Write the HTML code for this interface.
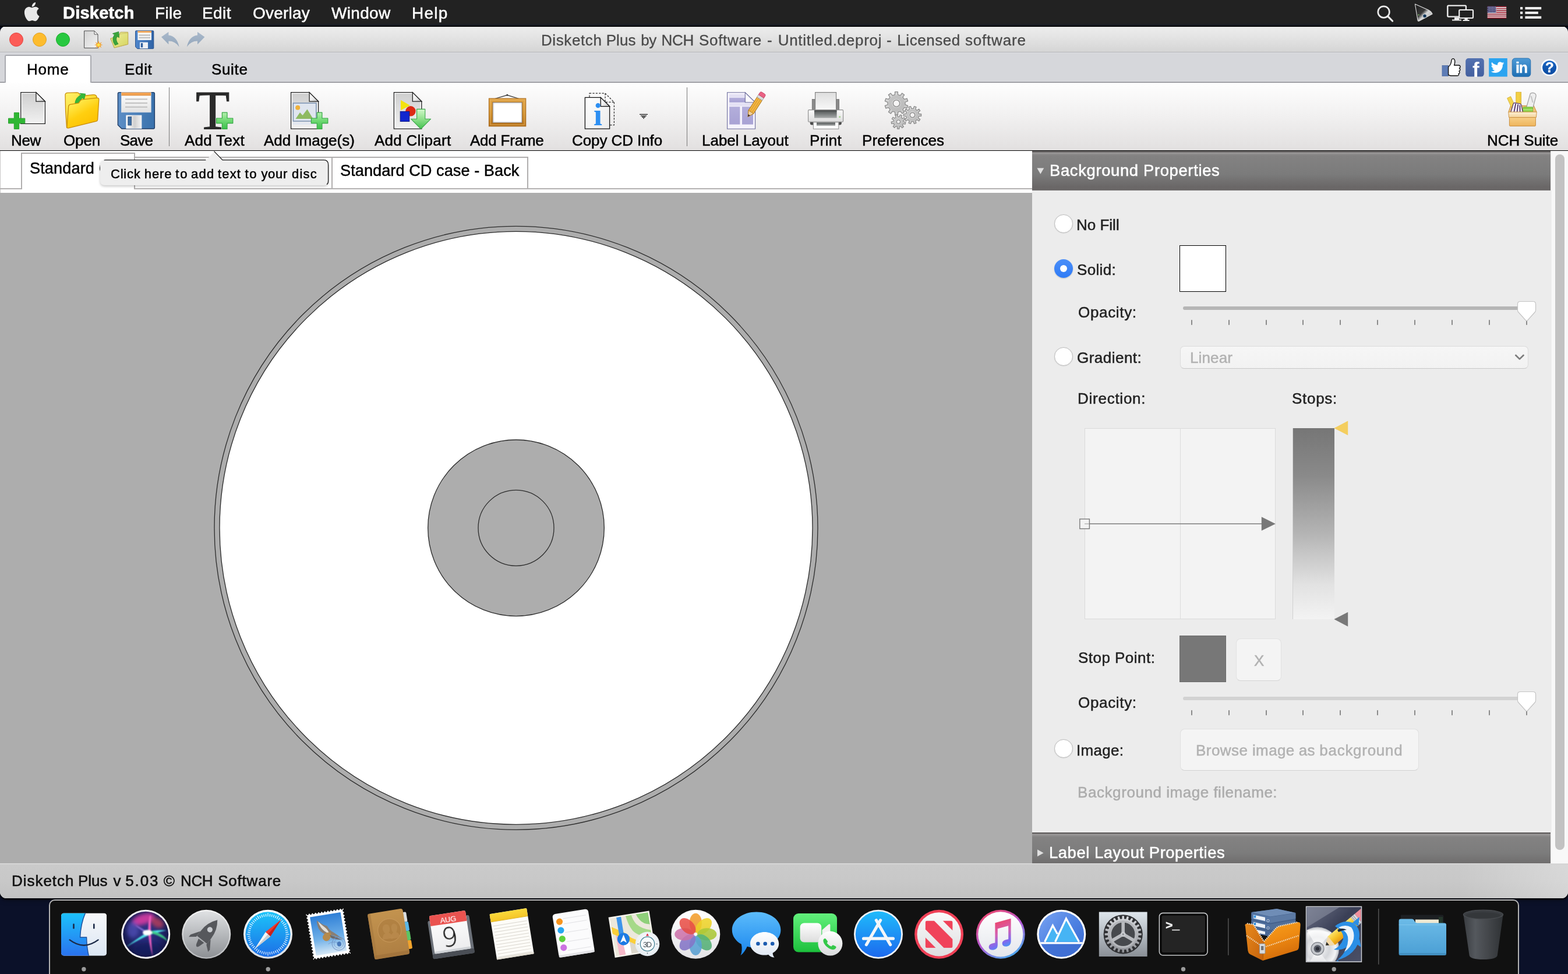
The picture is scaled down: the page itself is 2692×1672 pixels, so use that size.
<!DOCTYPE html>
<html lang="en">
<head>
<meta charset="utf-8">
<title>Disketch Plus by NCH Software - Untitled.deproj - Licensed software</title>
<style>

html,body{margin:0;padding:0;background:#0b1129;}
body{width:2692px;height:1672px;font-family:"Liberation Sans",sans-serif;}
#screen{position:relative;width:2692px;height:1672px;overflow:hidden;background:#0b1129;}
#screen div,#screen svg,#screen .part{position:absolute;box-sizing:border-box;}
.part{left:0;top:0;width:0;height:0;margin:0;padding:0;}
.t{white-space:nowrap;margin:0;padding:0;will-change:transform;}

</style>
</head>
<body>
<div id="screen">
<div id="window" style="left:0;top:45px;width:2692px;height:1497px;border-radius:10px 10px 11px 11px;background:#ececec;overflow:hidden;box-shadow:0 1px 3px 1px rgba(0,0,0,.9),0 3px 10px rgba(0,0,0,.35);"></div>
<header class="part" id="sec-menubar" aria-label="macOS menu bar">
<div id="menubar" style="left:0;top:0;width:2692px;height:46px;background:linear-gradient(#222222 0,#222222 40px,#1d2028 42px,#14161c 44px,#000 45.5px);"></div>
<svg id="mbicons" style="left:0;top:0;" width="2692" height="46" viewBox="0 0 2692 46">
<g transform="translate(41.65 1.7) scale(0.068 0.0721)"><path d="M318.7 268.7c-.2-36.7 16.400-64.400 50-84.800-18.800-26.900-47.200-41.700-84.700-44.600-35.500-2.800-74.300 20.700-88.500 20.700-15 0-49.400-19.700-76.400-19.700C63.300 141.200 4 184.800 4 273.500q0 39.300 14.400 81.200c12.800 36.700 59 126.700 107.200 125.200 25.200-.6 43-17.900 75.800-17.900 31.800 0 48.300 17.900 76.400 17.900 48.600-.7 90.400-82.500 102.600-119.300-65.200-30.700-61.700-90-61.700-91.900zm-56.600-164.200c27.300-32.400 24.800-61.900 24-72.500-24.100 1.400-52 16.400-67.900 34.900-17.500 19.800-27.800 44.300-25.600 71.900 26.100 2 49.900-11.400 69.500-34.300z" fill="#e9e9e9"/></g>
<circle cx="2375.6" cy="20.6" r="9.8" fill="none" stroke="#ebebeb" stroke-width="2.7"/>
<path d="M2382.6 27.8 L2390.6 36" stroke="#ebebeb" stroke-width="3.2" stroke-linecap="round"/>
<defs><linearGradient id="mbProj" x1="0" y1="0" x2="1" y2="1"><stop offset="0" stop-color="#1a1a1a"/><stop offset="0.45" stop-color="#3a3a3a"/><stop offset="0.6" stop-color="#d8d8d8"/><stop offset="1" stop-color="#9a9a9a"/></linearGradient></defs>
<path d="M2429.4 7 L2452 17 Q2457.6 19.6 2459 24 L2436.5 36 Q2434.4 37 2434 34.6 Z" fill="url(#mbProj)" stroke="#e4e4e4" stroke-width="1.1" stroke-linejoin="round"/>
<circle cx="2446" cy="27.4" r="3.4" fill="#14385a" stroke="#e0e0e0" stroke-width="1"/>
<circle cx="2435.6" cy="25.6" r="1.1" fill="#7fc06a"/>
<rect x="2485.3" y="9.6" width="31.6" height="19" rx="1.5" fill="#222" stroke="#ededed" stroke-width="2.4"/>
<path d="M2497 30 V33.4 H2493 V35.6 H2509 V33.4 H2505 V30 Z" fill="#ededed"/>
<rect x="2505.2" y="17" width="23.8" height="14" rx="1.2" fill="#222" stroke="#ededed" stroke-width="2.2"/>
<path d="M2514.4 32 V34 H2511.6 V36 H2522.6 V34 H2519.8 V32 Z" fill="#ededed"/>
<rect x="2553.6" y="10.80" width="32.6" height="1.6" fill="#b5283c"/><rect x="2553.6" y="12.40" width="32.6" height="1.6" fill="#f2f2f2"/><rect x="2553.6" y="14.00" width="32.6" height="1.6" fill="#b5283c"/><rect x="2553.6" y="15.60" width="32.6" height="1.6" fill="#f2f2f2"/><rect x="2553.6" y="17.20" width="32.6" height="1.6" fill="#b5283c"/><rect x="2553.6" y="18.80" width="32.6" height="1.6" fill="#f2f2f2"/><rect x="2553.6" y="20.40" width="32.6" height="1.6" fill="#b5283c"/><rect x="2553.6" y="22.00" width="32.6" height="1.6" fill="#f2f2f2"/><rect x="2553.6" y="23.60" width="32.6" height="1.6" fill="#b5283c"/><rect x="2553.6" y="25.20" width="32.6" height="1.6" fill="#f2f2f2"/><rect x="2553.6" y="26.80" width="32.6" height="1.6" fill="#b5283c"/><rect x="2553.6" y="28.40" width="32.6" height="1.6" fill="#f2f2f2"/><rect x="2553.6" y="30.00" width="32.6" height="1.6" fill="#b5283c"/>
<rect x="2553.6" y="10.8" width="14.8" height="11.2" fill="#3c3b6e"/>
<circle cx="2555.20" cy="12.20" r="0.6" fill="#e8e8f0"/><circle cx="2557.65" cy="12.20" r="0.6" fill="#e8e8f0"/><circle cx="2560.10" cy="12.20" r="0.6" fill="#e8e8f0"/><circle cx="2562.55" cy="12.20" r="0.6" fill="#e8e8f0"/><circle cx="2565.00" cy="12.20" r="0.6" fill="#e8e8f0"/><circle cx="2567.45" cy="12.20" r="0.6" fill="#e8e8f0"/><circle cx="2556.40" cy="14.15" r="0.6" fill="#e8e8f0"/><circle cx="2558.85" cy="14.15" r="0.6" fill="#e8e8f0"/><circle cx="2561.30" cy="14.15" r="0.6" fill="#e8e8f0"/><circle cx="2563.75" cy="14.15" r="0.6" fill="#e8e8f0"/><circle cx="2566.20" cy="14.15" r="0.6" fill="#e8e8f0"/><circle cx="2568.65" cy="14.15" r="0.6" fill="#e8e8f0"/><circle cx="2555.20" cy="16.10" r="0.6" fill="#e8e8f0"/><circle cx="2557.65" cy="16.10" r="0.6" fill="#e8e8f0"/><circle cx="2560.10" cy="16.10" r="0.6" fill="#e8e8f0"/><circle cx="2562.55" cy="16.10" r="0.6" fill="#e8e8f0"/><circle cx="2565.00" cy="16.10" r="0.6" fill="#e8e8f0"/><circle cx="2567.45" cy="16.10" r="0.6" fill="#e8e8f0"/><circle cx="2556.40" cy="18.05" r="0.6" fill="#e8e8f0"/><circle cx="2558.85" cy="18.05" r="0.6" fill="#e8e8f0"/><circle cx="2561.30" cy="18.05" r="0.6" fill="#e8e8f0"/><circle cx="2563.75" cy="18.05" r="0.6" fill="#e8e8f0"/><circle cx="2566.20" cy="18.05" r="0.6" fill="#e8e8f0"/><circle cx="2568.65" cy="18.05" r="0.6" fill="#e8e8f0"/><circle cx="2555.20" cy="20.00" r="0.6" fill="#e8e8f0"/><circle cx="2557.65" cy="20.00" r="0.6" fill="#e8e8f0"/><circle cx="2560.10" cy="20.00" r="0.6" fill="#e8e8f0"/><circle cx="2562.55" cy="20.00" r="0.6" fill="#e8e8f0"/><circle cx="2565.00" cy="20.00" r="0.6" fill="#e8e8f0"/><circle cx="2567.45" cy="20.00" r="0.6" fill="#e8e8f0"/><circle cx="2556.40" cy="21.95" r="0.6" fill="#e8e8f0"/><circle cx="2558.85" cy="21.95" r="0.6" fill="#e8e8f0"/><circle cx="2561.30" cy="21.95" r="0.6" fill="#e8e8f0"/><circle cx="2563.75" cy="21.95" r="0.6" fill="#e8e8f0"/><circle cx="2566.20" cy="21.95" r="0.6" fill="#e8e8f0"/><circle cx="2568.65" cy="21.95" r="0.6" fill="#e8e8f0"/>
<rect x="2610" y="12" width="4.2" height="4.2" fill="#ededed"/><rect x="2618.4" y="12" width="27.8" height="4.2" fill="#ededed"/>
<rect x="2610" y="19.9" width="4.2" height="4.2" fill="#ededed"/><rect x="2618.4" y="19.9" width="22.4" height="4.2" fill="#ededed"/>
<rect x="2610" y="27.8" width="4.2" height="4.2" fill="#ededed"/><rect x="2618.4" y="27.8" width="27.8" height="4.2" fill="#ededed"/>
</svg>
<div class="t" style="left:108.04px;top:7.80px;font-size:29px;line-height:29px;letter-spacing:0.218px;color:#fff;font-weight:bold;-webkit-text-stroke:0.7px #fff;">Disketch</div>
<div class="t" style="left:265.52px;top:9.00px;font-size:28px;line-height:28px;letter-spacing:0.334px;color:#fff;-webkit-text-stroke:0.5px #fff;">File</div>
<div class="t" style="left:347.12px;top:9.00px;font-size:28px;line-height:28px;letter-spacing:0.433px;color:#fff;-webkit-text-stroke:0.5px #fff;">Edit</div>
<div class="t" style="left:433.87px;top:9.00px;font-size:28px;line-height:28px;letter-spacing:0.213px;color:#fff;-webkit-text-stroke:0.5px #fff;">Overlay</div>
<div class="t" style="left:569.14px;top:9.00px;font-size:28px;line-height:28px;letter-spacing:0.303px;color:#fff;-webkit-text-stroke:0.5px #fff;">Window</div>
<div class="t" style="left:706.82px;top:9.00px;font-size:28px;line-height:28px;letter-spacing:1.273px;color:#fff;-webkit-text-stroke:0.5px #fff;">Help</div>
</header>
<section class="part" id="sec-titlebar" aria-label="Window title bar">
<div id="titlebar" style="left:0;top:45.5px;width:2692px;height:44.5px;border-radius:10px 10px 0 0;background:linear-gradient(#ededed,#e4e4e4 40%,#d5d5d5);border-bottom:1.4px solid #b4b5b9;"></div>
<div style="left:16px;top:56px;width:24px;height:24px;border-radius:50%;background:#fc5c57;border:1px solid #e14640;"></div>
<div style="left:56px;top:56px;width:24px;height:24px;border-radius:50%;background:#fdbc2e;border:1px solid #dfa023;"></div>
<div style="left:96px;top:56px;width:24px;height:24px;border-radius:50%;background:#28c840;border:1px solid #1cab29;"></div>
<svg id="qaicons" style="left:130px;top:46px;" width="240" height="44" viewBox="130 46 240 44">
<defs>
<linearGradient id="qpg" x1="0" y1="0" x2="1" y2="1"><stop offset="0" stop-color="#d4d4d4"/><stop offset="1" stop-color="#f2f2f2"/></linearGradient>
<linearGradient id="qfold" x1="0" y1="0" x2="1" y2="1"><stop offset="0" stop-color="#eef0a0"/><stop offset="1" stop-color="#d6d45e"/></linearGradient>
<linearGradient id="qflop" x1="0" y1="0" x2="1" y2="0"><stop offset="0" stop-color="#4f86cc"/><stop offset="1" stop-color="#2f63a6"/></linearGradient>
<linearGradient id="qarrow" x1="0" y1="0" x2="0" y2="1"><stop offset="0" stop-color="#a9b9cb"/><stop offset="1" stop-color="#93a6bb"/></linearGradient>
</defs>
<path d="M144.6 53 H162 L168 59 V82.4 H144.6 Z" fill="url(#qpg)" stroke="#4a4a4a" stroke-width="1"/>
<path d="M162 53 V59 H168 Z" fill="#fff" stroke="#4a4a4a" stroke-width="0.9"/>
<g transform="translate(169.2 77)"><path d="M0 -7 L1.6 -2.6 L5.6 -4.8 L3.2 -1 L7.4 0 L3.2 1.2 L5.2 5 L1.4 2.8 L0 7 L-1.4 2.8 L-5.2 5 L-3.2 1.2 L-7.4 0 L-3.2 -1 L-5.6 -4.8 L-1.6 -2.6 Z" fill="#f6a12a"/><circle r="2.6" fill="#ffe34a"/></g>
<path d="M205 58.4 L207 55.2 H219.6 V76 L196 82 L190 66 L203 62.6 Z" fill="url(#qfold)" stroke="#b9a850" stroke-width="1"/>
<path d="M189.4 66.2 L203.4 62.6 L206.4 58.2 L219.8 56.6 V76.2 L196.4 82.2 Z" fill="none" stroke="#c9b85c" stroke-width="0.8"/>
<path d="M197.6 77.6 Q190.6 68 196.6 59.6 L193.4 57.6 L203.8 54.4 L204.4 64.6 L201.2 62.4 Q197.4 68.6 203 75.4 Z" fill="#3aa43c" stroke="#2a8a2e" stroke-width="0.8" stroke-linejoin="round"/>
<path d="M233.8 52.8 H262.6 Q263.8 52.8 263.8 54 V82.4 Q263.8 83.6 262.6 83.6 H236 L232.6 80.4 V54 Q232.6 52.8 233.8 52.8 Z" fill="url(#qflop)" stroke="#244f8c" stroke-width="1"/>
<rect x="236.4" y="53.2" width="23.6" height="15.6" fill="#f6f6f6"/>
<rect x="236.4" y="53.2" width="23.6" height="2.8" fill="#f3a656"/>
<rect x="238.4" y="59.4" width="19.6" height="2" fill="#b9b9b9"/>
<rect x="238.4" y="63.8" width="19.6" height="2" fill="#b9b9b9"/>
<rect x="240" y="72.6" width="14" height="10.6" fill="#eef1f6"/>
<rect x="241.8" y="74" width="3.4" height="7.4" fill="#2f5f9f"/>
<path d="M277 63.6 L289.4 54.8 V60.4 Q303.6 61.8 307.6 80.4 Q300.4 70.4 289.4 70.6 V76.2 Z" fill="url(#qarrow)"/>
<path d="M351.4 63.6 L339 54.8 V60.4 Q324.8 61.8 320.8 80.4 Q328 70.4 339 70.6 V76.2 Z" fill="url(#qarrow)"/>
</svg>
<div class="t" style="left:929.06px;top:56.00px;font-size:26px;line-height:26px;color:#4a4a4a;-webkit-text-stroke:0.3px #4a4a4a;"><span style="letter-spacing:0.593px;">Disketch</span> <span style="letter-spacing:0.033px;margin-left:0.034px;">Plus</span> <span style="letter-spacing:-0.563px;margin-left:1.635px;">by</span> <span style="letter-spacing:-0.275px;margin-left:1.722px;">NCH</span> <span style="letter-spacing:0.658px;margin-left:1.723px;">Software</span> <span style="letter-spacing:0.000px;margin-left:1.819px;">-</span> <span style="letter-spacing:0.730px;margin-left:2.787px;">Untitled.deproj</span> <span style="letter-spacing:0.000px;margin-left:0.472px;">-</span> <span style="letter-spacing:0.555px;margin-left:2.479px;">Licensed</span> <span style="letter-spacing:0.816px;margin-left:0.820px;">software</span></div>
</section>
<nav class="part" id="sec-ribbon" aria-label="Ribbon tabs">
<div id="ribbon" style="left:0;top:90px;width:2692px;height:52px;background:linear-gradient(#dddee2 0,#dddee2 1.2px,#d6d7db 1.2px,#d6d7db 49.6px,#b9babf 49.6px,#b9babf 50.6px,#828389 50.6px,#828389 52px);"></div>
<div id="tab-home" style="left:7.6px;top:93.6px;width:149.4px;height:49px;background:#fff;border:2px solid #a9aab0;border-bottom:none;border-radius:3px 3px 0 0;"></div>
<svg id="social" style="left:2470px;top:94px;" width="215" height="44" viewBox="2470 94 215 44">
<defs>
<linearGradient id="fbG" x1="0" y1="0" x2="0" y2="1"><stop offset="0" stop-color="#5371b0"/><stop offset="1" stop-color="#435f9f"/></linearGradient>
<linearGradient id="liG" x1="0" y1="0" x2="0" y2="1"><stop offset="0" stop-color="#4d9ad6"/><stop offset="1" stop-color="#1e6fb4"/></linearGradient>
<linearGradient id="hpG" x1="0" y1="0" x2="0" y2="1"><stop offset="0" stop-color="#1a66c4"/><stop offset="1" stop-color="#0a4aa0"/></linearGradient>
</defs>
<rect x="2476" y="112.4" width="10.6" height="18.2" fill="#5d7cb6" stroke="#4f6ca4" stroke-width="0.8"/>
<path d="M2486.6 114.6 Q2490.6 112 2491.6 106 Q2492 100.6 2494.6 100.6 Q2497.8 101 2497.8 105.6 Q2497.8 109 2496.6 112 H2504.4 Q2507 112.2 2507 114.8 Q2507 116.6 2505.4 117.2 Q2507 118 2506.8 120 Q2506.6 121.8 2505 122.2 Q2506.2 123.2 2505.8 125 Q2505.4 126.6 2504 126.8 Q2504.8 127.8 2504.2 129 Q2503.6 130 2502 130 H2491 Q2488.6 129.8 2486.6 128.4 Z" fill="#ffffff" stroke="#0d0d0d" stroke-width="1.4" stroke-linejoin="round"/>
<rect x="2516.2" y="100" width="31.6" height="31.6" rx="5" fill="url(#fbG)"/>
<rect x="2556.2" y="100" width="31.6" height="31.6" fill="#2ba4f0"/>
<path d="M2582.6 108.4 Q2581.4 109 2580 109.2 Q2581.4 108.2 2582 106.6 Q2580.6 107.4 2579 107.8 Q2577.6 106.2 2575.4 106.2 Q2571.4 106.4 2571 110.6 Q2571 111.2 2571.2 111.8 Q2565.2 111.4 2561.2 106.8 Q2560.4 108.2 2560.6 109.8 Q2560.8 111.8 2562.6 113.2 Q2561.4 113.2 2560.4 112.6 Q2560.6 116.2 2564.2 117.4 Q2563.2 117.8 2562 117.6 Q2563 120.6 2566.4 120.8 Q2563.8 123 2559.6 122.8 Q2563.2 125.2 2567.6 125 Q2574.6 124.6 2578 118.8 Q2580.2 115 2580 110.8 Q2581.6 109.8 2582.6 108.4 Z" fill="#ffffff"/>
<rect x="2596.2" y="100" width="31.6" height="31.6" rx="5" fill="url(#liG)" stroke="#1b66a8" stroke-width="0.8"/>
<circle cx="2660.1" cy="115.9" r="15.2" fill="#ffffff" stroke="#c9ccd4" stroke-width="0.8"/>
<circle cx="2660.1" cy="115.9" r="12" fill="url(#hpG)"/>
</svg>
<div class="t" style="left:45.80px;top:105.50px;font-size:26px;line-height:26px;letter-spacing:0.818px;color:#000;-webkit-text-stroke:0.5px #000;">Home</div>
<div class="t" style="left:214.10px;top:105.50px;font-size:26px;line-height:26px;letter-spacing:0.667px;color:#000;-webkit-text-stroke:0.5px #000;">Edit</div>
<div class="t" style="left:362.84px;top:105.50px;font-size:26px;line-height:26px;letter-spacing:0.656px;color:#000;-webkit-text-stroke:0.5px #000;">Suite</div>
<div class="t" style="left:2528.17px;top:101.60px;font-size:35px;line-height:35px;letter-spacing:0.000px;color:#fff;font-weight:bold;z-index:2;">f</div>
<div class="t" style="left:2601.83px;top:104.20px;font-size:25px;line-height:25px;letter-spacing:-1.078px;color:#fff;font-weight:bold;-webkit-text-stroke:0.3px #fff;z-index:2;">in</div>
<div class="t" style="left:2652.98px;top:104.40px;font-size:24px;line-height:24px;letter-spacing:0.000px;color:#fff;font-weight:bold;-webkit-text-stroke:0.4px #fff;z-index:2;">?</div>
</nav>
<section class="part" id="sec-toolbar" aria-label="Home toolbar">
<div id="toolbar" style="left:0;top:142px;width:2692px;height:117px;background:linear-gradient(#fefefe,#f1f0f0 50%,#e2e0e0);border-bottom:1px solid #000;"></div>
<div style="left:289.6px;top:150px;width:1.4px;height:100.5px;background:#7a7a7a;"></div>
<div style="left:1178.8px;top:150px;width:1.4px;height:100.5px;background:#7a7a7a;"></div>

<svg id="tbicons" style="left:0;top:141px;" width="2692" height="118" viewBox="0 141 2692 118">
<defs>
<linearGradient id="pgGray" x1="0" y1="0" x2="0" y2="1"><stop offset="0" stop-color="#cfcfcf"/><stop offset="1" stop-color="#f0f0f0"/></linearGradient>
<linearGradient id="pgWhite" x1="0" y1="0" x2="1" y2="1"><stop offset="0" stop-color="#ffffff"/><stop offset="1" stop-color="#ebebeb"/></linearGradient>
<linearGradient id="pgFold" x1="0" y1="0" x2="1" y2="1"><stop offset="0" stop-color="#ffffff"/><stop offset="0.5" stop-color="#eeeeee"/><stop offset="1" stop-color="#bdbdbd"/></linearGradient>
<linearGradient id="plusG" x1="0" y1="0" x2="0" y2="1"><stop offset="0" stop-color="#b4efae"/><stop offset="0.5" stop-color="#6fd873"/><stop offset="1" stop-color="#3cc04c"/></linearGradient>
<linearGradient id="folderBack" x1="0" y1="0" x2="1" y2="1"><stop offset="0" stop-color="#fff36a"/><stop offset="1" stop-color="#f6c200"/></linearGradient>
<linearGradient id="folderFront" x1="0" y1="0" x2="0.6" y2="1"><stop offset="0" stop-color="#fffbd0"/><stop offset="0.25" stop-color="#ffe84a"/><stop offset="0.6" stop-color="#ffcf10"/><stop offset="1" stop-color="#fdc100"/></linearGradient>
<linearGradient id="floppy" x1="0" y1="0" x2="1" y2="0"><stop offset="0" stop-color="#5c8ec6"/><stop offset="0.5" stop-color="#4a7fb8"/><stop offset="1" stop-color="#3a72ad"/></linearGradient>
<linearGradient id="floppyLabel" x1="0" y1="0" x2="0" y2="1"><stop offset="0" stop-color="#ffffff"/><stop offset="1" stop-color="#e2e2e2"/></linearGradient>
<linearGradient id="shutter" x1="0" y1="0" x2="1" y2="0"><stop offset="0" stop-color="#ffffff"/><stop offset="0.55" stop-color="#d0d0d0"/><stop offset="1" stop-color="#f4f4f4"/></linearGradient>
<linearGradient id="wood" x1="0" y1="0" x2="0" y2="1"><stop offset="0" stop-color="#e0a448"/><stop offset="0.5" stop-color="#d0902e"/><stop offset="1" stop-color="#b46f18"/></linearGradient>
<linearGradient id="arrowG" x1="0" y1="0" x2="0" y2="1"><stop offset="0" stop-color="#d2f8cb"/><stop offset="0.5" stop-color="#8fe08b"/><stop offset="1" stop-color="#43c14f"/></linearGradient>
<linearGradient id="lav" x1="0" y1="0" x2="0" y2="1"><stop offset="0" stop-color="#b3aedb"/><stop offset="1" stop-color="#a8a2d4"/></linearGradient>
<linearGradient id="roller" x1="0" y1="0" x2="0" y2="1"><stop offset="0" stop-color="#4e5252"/><stop offset="1" stop-color="#a8abab"/></linearGradient>
<linearGradient id="prBody" x1="0" y1="0" x2="0" y2="1"><stop offset="0" stop-color="#fbfbfb"/><stop offset="1" stop-color="#dcdcdc"/></linearGradient>
<linearGradient id="prPaper" x1="0" y1="0" x2="0" y2="1"><stop offset="0" stop-color="#dedede"/><stop offset="1" stop-color="#fafafa"/></linearGradient>
<linearGradient id="gearG" x1="0" y1="0" x2="1" y2="1"><stop offset="0" stop-color="#dcdcdc"/><stop offset="1" stop-color="#c2c2c2"/></linearGradient>
<linearGradient id="boxG" x1="0" y1="0" x2="0" y2="1"><stop offset="0" stop-color="#f7cf86"/><stop offset="1" stop-color="#eeb45c"/></linearGradient>
<linearGradient id="rimG" x1="0" y1="0" x2="0" y2="1"><stop offset="0" stop-color="#fdf0d6"/><stop offset="1" stop-color="#f3d39a"/></linearGradient>
<filter id="frblur" x="-20%" y="-20%" width="140%" height="140%"><feGaussianBlur stdDeviation="1.6"/></filter>
<clipPath id="frclip"><rect x="845.8" y="175.6" width="50.7" height="35.3"/></clipPath>
</defs>

<!-- New -->
<path d="M35.8 158.6 H61.900000000000006 L77.4 174.1 V212.3 H35.8 Z" fill="#fff" stroke="#1f1f1f" stroke-width="1.3" stroke-linejoin="miter"/><path d="M38.0 160.79999999999998 H61.400000000000006 V174.6 H75.2 V210.10000000000002 H38.0 Z" fill="url(#pgGray)"/><path d="M61.900000000000006 158.6 L77.4 174.1 H61.900000000000006 Z" fill="url(#pgFold)" stroke="#1f1f1f" stroke-width="1.3" stroke-linejoin="miter"/>
<path d="M24.3 193.4 H32.6 V203.2 H42.8 V211.8 H32.6 V221.4 H24.3 V211.8 H14.5 V203.2 H24.3 Z" fill="#2fb733" stroke="#27a02b" stroke-width="1"/>

<!-- Open -->
<path d="M112 163 Q112 159.6 116 159.4 L132 158.8 Q135 158.8 136.5 161.5 L138.5 165 L160 162.6 Q165 162.3 166 166 L167 172 L167 205 L114.5 219 Q112 190 112 163 Z" fill="url(#folderBack)" stroke="#c98d06" stroke-width="1.3" stroke-linejoin="round"/>
<path d="M128.6 179.4 Q129.2 166.6 139.4 163 L137 160.2 L146.8 161.2 L144.2 171.4 L142 167.8 Q136.2 171.8 136.2 180.8 Z" fill="#34b83a" stroke="#2a9a30" stroke-width="0.8" stroke-linejoin="round"/>
<path d="M117.6 183 Q117.6 180 120.6 179.4 L135 176.8 L138 172.6 Q139.2 171 141.4 170.8 L166.8 168.2 Q169.8 168 169.8 171 L167.6 205.4 Q167.4 207.6 165.2 208.2 L117.4 219.8 Q114.8 220.2 114.9 217.6 Z" fill="url(#folderFront)" stroke="#c98d06" stroke-width="1.3" stroke-linejoin="round"/>

<!-- Save -->
<path d="M204.6 158.6 H263.2 Q265.4 158.6 265.4 160.8 V218.8 Q265.4 221 263.2 221 H209 L202.4 214.6 V160.8 Q202.4 158.6 204.6 158.6 Z" fill="url(#floppy)" stroke="#1f3c66" stroke-width="1.4" stroke-linejoin="round"/>
<rect x="208.4" y="158.8" width="50.8" height="34" fill="url(#floppyLabel)" stroke="#d8dde4" stroke-width="0.8"/>
<rect x="208.4" y="158.8" width="50.8" height="5" fill="#f2a353"/>
<rect x="208.4" y="163.2" width="50.8" height="1" fill="#d98535"/>
<rect x="215" y="169.4" width="38" height="1.8" fill="#bcbcbc"/>
<rect x="215" y="176" width="38" height="1.8" fill="#bcbcbc"/>
<rect x="215" y="182.8" width="38" height="1.8" fill="#bcbcbc"/>
<rect x="216.8" y="198" width="26.2" height="22.6" fill="url(#shutter)" stroke="#e9eef5" stroke-width="0.8"/>
<rect x="219.8" y="200.4" width="5.8" height="14.6" fill="#3f6fa3" stroke="#2c4f7c" stroke-width="0.8"/>

<!-- Add Text plus -->
<path d="M381.40000000000003 193.2 H390.00000000000006 V203.0 H399.8 V211.60000000000002 H390.00000000000006 V221.4 H381.40000000000003 V211.60000000000002 H371.6 V203.0 H381.40000000000003 Z" fill="url(#plusG)" stroke="#35a843" stroke-width="1.2" stroke-linejoin="round"/>

<!-- Add Image -->
<path d="M499.6 158.6 H531.1 L546.6 174.1 V221.2 H499.6 Z" fill="#fff" stroke="#1f1f1f" stroke-width="1.3" stroke-linejoin="miter"/><path d="M501.8 160.79999999999998 H530.6 V174.6 H544.4 V219.0 H501.8 Z" fill="url(#pgGray)"/><path d="M531.1 158.6 L546.6 174.1 H531.1 Z" fill="url(#pgFold)" stroke="#1f1f1f" stroke-width="1.3" stroke-linejoin="miter"/>
<rect x="503.4" y="177" width="39.4" height="31" fill="#dfe5ef" stroke="#7f97b6" stroke-width="1.6"/>
<circle cx="511.2" cy="184.8" r="4" fill="#f0b13a"/>
<path d="M507.5 204 L515 193 L519.5 198 L527.5 187.5 L537.5 204 Z" fill="#8eba62"/>
<rect x="502.6" y="210" width="40" height="4" fill="#e3e8f1"/>
<path d="M544.3 193.2 H552.8999999999999 V203.0 H562.8 V211.60000000000002 H552.8999999999999 V221.4 H544.3 V211.60000000000002 H534.4 V203.0 H544.3 Z" fill="url(#plusG)" stroke="#35a843" stroke-width="1.2" stroke-linejoin="round"/>

<!-- Add Clipart -->
<path d="M676.4 158.6 H708.3 L723.8 174.1 V221.2 H676.4 Z" fill="#fff" stroke="#1f1f1f" stroke-width="1.3" stroke-linejoin="miter"/><path d="M678.6 160.79999999999998 H707.8 V174.6 H721.5999999999999 V219.0 H678.6 Z" fill="url(#pgGray)"/><path d="M708.3 158.6 L723.8 174.1 H708.3 Z" fill="url(#pgFold)" stroke="#1f1f1f" stroke-width="1.3" stroke-linejoin="miter"/>
<path d="M688 171.8 L704 181 L688 189.2 Z" fill="#f4e20c"/>
<circle cx="705" cy="190.8" r="8.7" fill="#dd2a14"/>
<rect x="687.2" y="191.4" width="15.6" height="17" fill="#1026cf" stroke="#0a1786" stroke-width="1"/>
<path d="M715.6 187.4 H729.8 V204.2 H739.6 L722.6 221.4 L705.6 204.2 H715.6 Z" fill="url(#arrowG)" stroke="#3aa848" stroke-width="1.1" stroke-linejoin="round"/>

<!-- Add Frame -->
<path d="M850 169.4 L870.8 163.2 L890.6 169.4" fill="none" stroke="#4a4a4a" stroke-width="1.5" stroke-linejoin="round"/>
<circle cx="870.8" cy="163.2" r="1.4" fill="#333"/>
<rect x="839.4" y="169" width="63.4" height="47.8" fill="url(#wood)" stroke="#a8681a" stroke-width="1"/>
<rect x="842" y="171.6" width="58.2" height="42.6" fill="none" stroke="#e9b765" stroke-width="1.2" opacity="0.7"/>
<rect x="845.8" y="175.6" width="50.7" height="35.3" fill="#ffffff" stroke="#9c6216" stroke-width="1"/>
<g clip-path="url(#frclip)"><rect x="844.8" y="174.6" width="52.7" height="37.3" fill="none" stroke="#8f96a8" stroke-width="3" filter="url(#frblur)"/></g>

<!-- Copy CD Info -->
<path d="M1012 160.2 H1039 L1054.4 175.4 V214.6 H1012 Z" fill="none" stroke="#2a2a2a" stroke-width="1.2" stroke-dasharray="3.2 2.2"/>
<path d="M1039 160.2 V175.4 H1054.4" fill="none" stroke="#2a2a2a" stroke-width="1.2" stroke-dasharray="3.2 2.2"/>
<path d="M1004.4 167.4 H1031.2 L1046.6 182.6 V221.2 H1004.4 Z" fill="url(#pgWhite)" stroke="#111" stroke-width="1.3" stroke-linejoin="miter"/>
<path d="M1031.2 167.4 L1046.6 182.6 H1031.2 Z" fill="url(#pgFold)" stroke="#111" stroke-width="1.3" stroke-linejoin="miter"/>
<path d="M1098 196.4 H1112 M1100 198.8 H1110 M1102 201 H1108 M1104 203.2 H1106" stroke="#1a1a1a" stroke-width="1.3" fill="none"/>

<!-- Label Layout -->
<path d="M1248.6 158.8 H1279.3 L1296.6 175.8 V221.2 H1248.6 Z" fill="#f5f3fc" stroke="#6d6d9c" stroke-width="1.1"/>
<rect x="1252.2" y="161.8" width="27" height="5.6" fill="#e4e1f4"/>
<rect x="1252.2" y="167.8" width="27.2" height="8" fill="url(#lav)"/>
<rect x="1252.2" y="176.6" width="41" height="5.6" fill="#e4e1f4"/>
<rect x="1252.2" y="183.2" width="18.2" height="30.4" fill="url(#lav)"/>
<rect x="1274" y="183.2" width="19" height="30.4" fill="url(#lav)"/>
<path d="M1279.3 158.8 L1296.6 175.8 H1279.3 Z" fill="#fbfaff" stroke="#6d6d9c" stroke-width="1.1" stroke-linejoin="miter"/>
<g transform="translate(1284.2 200.2) rotate(-57)">
<path d="M0 0 L9.5 -5.2 H37 V5.2 H9.5 Z" fill="#f2b544" stroke="#b07a1c" stroke-width="1"/>
<path d="M9.5 -1.8 H37 M9.5 1.8 H37" stroke="#d99a2c" stroke-width="1" fill="none"/>
<path d="M0 0 L9.5 -5.2 V5.2 Z" fill="#f0cf9c" stroke="#b07a1c" stroke-width="0.8"/>
<path d="M0 0 L3.6 -2 V2 Z" fill="#3a2a2a"/>
<rect x="36.5" y="-5.4" width="5" height="10.8" fill="#dcdcdc" stroke="#9a9a9a" stroke-width="0.8"/>
<path d="M41.5 -5.4 H45.6 Q48.2 -5.4 48.2 -2.8 V2.8 Q48.2 5.4 45.6 5.4 H41.5 Z" fill="#ea6284" stroke="#c24464" stroke-width="0.8"/>
</g>

<!-- Print -->
<rect x="1394.3" y="170.4" width="6" height="20" fill="#8a8a8a" stroke="#6e6e6e" stroke-width="0.8"/>
<rect x="1434.6" y="170.4" width="6" height="20" fill="#8a8a8a" stroke="#6e6e6e" stroke-width="0.8"/>
<rect x="1399.6" y="158.6" width="36" height="32" fill="url(#prPaper)" stroke="#7c7c7c" stroke-width="1.1"/>
<rect x="1390.8" y="206" width="54" height="8.6" rx="3" fill="#4a4a4a"/>
<rect x="1387.6" y="188.6" width="60" height="20.6" rx="1.5" fill="url(#prBody)" stroke="#8c8c8c" stroke-width="1.1"/>
<rect x="1398" y="189.6" width="38.6" height="13" fill="url(#roller)"/>
<rect x="1398" y="189.4" width="38.6" height="1.3" fill="#3f4242"/>
<rect x="1440.4" y="199.6" width="2.6" height="2.2" fill="#9ad37e"/>
<rect x="1396.4" y="209.8" width="43.4" height="11.6" fill="#fafafa" stroke="#9a9a9a" stroke-width="1.1"/>
<rect x="1402" y="210.4" width="32" height="5.4" fill="url(#roller)"/>

<!-- Preferences -->
<path d="M1554.05 179.63 L1558.64 181.29 L1557.18 185.83 L1552.48 184.51 L1549.93 188.07 L1552.66 192.11 L1548.82 194.92 L1545.79 191.10 L1541.63 192.47 L1541.46 197.35 L1536.70 197.37 L1536.50 192.49 L1532.33 191.16 L1529.33 195.01 L1525.46 192.22 L1528.16 188.16 L1525.57 184.63 L1520.89 185.98 L1519.39 181.45 L1523.97 179.75 L1523.95 175.37 L1519.36 173.71 L1520.82 169.17 L1525.52 170.49 L1528.07 166.93 L1525.34 162.89 L1529.18 160.08 L1532.21 163.90 L1536.37 162.53 L1536.54 157.65 L1541.30 157.63 L1541.50 162.51 L1545.67 163.84 L1548.67 159.99 L1552.54 162.78 L1549.84 166.84 L1552.43 170.37 L1557.11 169.02 L1558.61 173.55 L1554.03 175.25 Z M1544.60 177.50 A5.6 5.6 0 1 0 1533.40 177.50 A5.6 5.6 0 1 0 1544.60 177.50 Z" fill="url(#gearG)" fill-rule="evenodd" stroke="#8c8c8c" stroke-width="1.3" stroke-linejoin="round"/><circle cx="1539" cy="177.5" r="10.90" fill="none" stroke="#b5b5b5" stroke-width="6.10" opacity="0.55"/>
<path d="M1577.54 195.61 L1581.59 195.69 L1581.59 199.31 L1577.54 199.39 L1576.54 202.46 L1579.77 204.91 L1577.65 207.84 L1574.32 205.52 L1571.71 207.41 L1572.89 211.29 L1569.44 212.41 L1568.11 208.58 L1564.89 208.58 L1563.56 212.41 L1560.11 211.29 L1561.29 207.41 L1558.68 205.52 L1555.35 207.84 L1553.23 204.91 L1556.46 202.46 L1555.46 199.39 L1551.41 199.31 L1551.41 195.69 L1555.46 195.61 L1556.46 192.54 L1553.23 190.09 L1555.35 187.16 L1558.68 189.48 L1561.29 187.59 L1560.11 183.71 L1563.56 182.59 L1564.89 186.42 L1568.11 186.42 L1569.44 182.59 L1572.89 183.71 L1571.71 187.59 L1574.32 189.48 L1577.65 187.16 L1579.77 190.09 L1576.54 192.54 Z M1570.70 197.50 A4.2 4.2 0 1 0 1562.30 197.50 A4.2 4.2 0 1 0 1570.70 197.50 Z" fill="url(#gearG)" fill-rule="evenodd" stroke="#8c8c8c" stroke-width="1.3" stroke-linejoin="round"/><circle cx="1566.5" cy="197.5" r="8.20" fill="none" stroke="#b5b5b5" stroke-width="3.50" opacity="0.55"/>
<path d="M1551.30 209.10 L1554.77 209.83 L1554.13 213.02 L1550.64 212.33 L1549.18 214.73 L1551.37 217.52 L1548.82 219.55 L1546.60 216.79 L1543.93 217.68 L1543.82 221.23 L1540.56 221.15 L1540.63 217.60 L1538.01 216.57 L1535.65 219.21 L1533.21 217.06 L1535.54 214.39 L1534.20 211.91 L1530.68 212.42 L1530.20 209.20 L1533.71 208.65 L1534.27 205.90 L1531.25 204.02 L1532.95 201.25 L1535.99 203.08 L1538.19 201.33 L1537.08 197.96 L1540.17 196.92 L1541.31 200.28 L1544.13 200.35 L1545.45 197.06 L1548.47 198.25 L1547.20 201.56 L1549.31 203.42 L1552.43 201.75 L1553.99 204.60 L1550.88 206.32 Z M1545.70 209.00 A3.2 3.2 0 1 0 1539.30 209.00 A3.2 3.2 0 1 0 1545.70 209.00 Z" fill="url(#gearG)" fill-rule="evenodd" stroke="#8c8c8c" stroke-width="1.3" stroke-linejoin="round"/><circle cx="1542.5" cy="209" r="6.50" fill="none" stroke="#b5b5b5" stroke-width="2.10" opacity="0.55"/>

<!-- NCH Suite -->
<g>
<path d="M2593.6 181.4 H2633.2 L2638.2 192.4 H2589.8 Z" fill="#eec27a" stroke="#c9903c" stroke-width="1" stroke-linejoin="round"/>
<path d="M2587.6 168.6 L2593.6 165.6 L2603 186 L2597 189 Z" fill="#f3d54e" stroke="#d1a92a" stroke-width="0.8"/>
<rect x="2602.8" y="158.2" width="8.8" height="34" fill="#f4d043" stroke="#d1a92a" stroke-width="0.8"/>
<path d="M2609.2 161 V190" stroke="#d9b22e" stroke-width="1" stroke-dasharray="1.2 2" fill="none"/>
<path d="M2627.4 160.6 Q2631 158.4 2634.4 160 Q2637.6 161.6 2637 165.4 L2630.4 190 L2620 186.4 Z" fill="#eeeeee" stroke="#9e9e9e" stroke-width="1.2" stroke-linejoin="round"/>
<path d="M2628.6 165 L2631.6 176" stroke="#c9c9c9" stroke-width="2.4" fill="none"/>
<rect x="2614.6" y="183.8" width="17" height="9" rx="1.5" fill="#8ad048" stroke="#6fb230" stroke-width="0.8"/>
<path d="M2615 188.4 H2631.4" stroke="#b6e884" stroke-width="1.4"/>
<path d="M2593.6 193 L2598 178.4 Q2598.8 176.2 2601 176.6 L2609.4 178 Q2611.4 178.6 2612 180.6 L2614.4 193 Z" fill="#f4f1f8" stroke="#4b2a62" stroke-width="1.2" stroke-linejoin="round"/>
<path d="M2599.4 192 L2602.2 178 M2604.6 192 L2606.2 179 M2609.6 192 L2609.4 180.4" stroke="#4b2a62" stroke-width="1.7" fill="none"/>
<path d="M2589.8 192.2 H2638.2 L2637.4 201.6 H2590.6 Z" fill="url(#rimG)" stroke="#cf9646" stroke-width="1" stroke-linejoin="round"/>
<rect x="2591.4" y="201.6" width="45" height="14.8" rx="1.2" fill="url(#boxG)" stroke="#c98f40" stroke-width="1"/>
</g>
</svg>
<div class="t" style="left:19.00px;top:227.50px;font-size:26px;line-height:26px;letter-spacing:-0.330px;color:#000;-webkit-text-stroke:0.5px #000;">New</div>
<div class="t" style="left:108.51px;top:227.50px;font-size:26px;line-height:26px;letter-spacing:-0.137px;color:#000;-webkit-text-stroke:0.5px #000;">Open</div>
<div class="t" style="left:205.64px;top:227.50px;font-size:26px;line-height:26px;letter-spacing:-0.759px;color:#000;-webkit-text-stroke:0.5px #000;">Save</div>
<div class="t" style="left:316.66px;top:227.50px;font-size:26px;line-height:26px;letter-spacing:0.276px;color:#000;-webkit-text-stroke:0.5px #000;">Add Text</div>
<div class="t" style="left:452.76px;top:227.50px;font-size:26px;line-height:26px;letter-spacing:-0.021px;color:#000;-webkit-text-stroke:0.5px #000;">Add Image(s)</div>
<div class="t" style="left:643.06px;top:227.50px;font-size:26px;line-height:26px;letter-spacing:0.253px;color:#000;-webkit-text-stroke:0.5px #000;">Add Clipart</div>
<div class="t" style="left:807.16px;top:227.50px;font-size:26px;line-height:26px;letter-spacing:-0.222px;color:#000;-webkit-text-stroke:0.5px #000;">Add Frame</div>
<div class="t" style="left:982.46px;top:227.50px;font-size:26px;line-height:26px;letter-spacing:-0.076px;color:#000;-webkit-text-stroke:0.5px #000;">Copy CD Info</div>
<div class="t" style="left:1204.60px;top:227.50px;font-size:26px;line-height:26px;letter-spacing:-0.020px;color:#000;-webkit-text-stroke:0.5px #000;">Label Layout</div>
<div class="t" style="left:1390.00px;top:227.50px;font-size:26px;line-height:26px;letter-spacing:0.338px;color:#000;-webkit-text-stroke:0.5px #000;">Print</div>
<div class="t" style="left:1480.10px;top:227.50px;font-size:26px;line-height:26px;letter-spacing:0.090px;color:#000;-webkit-text-stroke:0.5px #000;">Preferences</div>
<div class="t" style="left:2553.10px;top:227.50px;font-size:26px;line-height:26px;letter-spacing:-0.088px;color:#000;-webkit-text-stroke:0.5px #000;">NCH Suite</div>
<div class="t" style="left:335.86px;top:143.31px;font-size:95.5px;line-height:95.5px;letter-spacing:0.000px;color:#2a2a2a;font-family:'Liberation Serif', serif;-webkit-text-stroke:1.1px #2a2a2a;z-index:1;">T</div>
<div class="t" style="left:1018.99px;top:170.40px;font-size:54px;line-height:54px;letter-spacing:0.000px;color:#2d8ff2;font-weight:bold;font-family:'Liberation Serif', serif;z-index:1;">i</div>
</section>
<section class="part" id="sec-doctabs" aria-label="Document tabs">
<div id="doctabs" style="left:0;top:259px;width:1772px;height:72px;background:#fff;border-left:1px solid #c9c7c7;"></div>
<div style="left:0;top:322.5px;width:1772px;height:2px;background:#b3b1b1;"></div>
<div id="dtab1" style="left:35.5px;top:262px;width:196.5px;height:62.5px;background:#fff;border:2px solid #b0aeae;border-bottom:none;"></div>
<div id="dtab2" style="left:230px;top:269px;width:341px;height:53.5px;background:#fff;border:2px solid #b0aeae;border-bottom:none;"></div>
<div id="dtab3" style="left:569px;top:269px;width:337.8px;height:53.5px;background:#fff;border:2px solid #b0aeae;border-bottom:none;"></div>
<svg id="tooltip" style="left:160px;top:255px;z-index:5;" width="420" height="75" viewBox="160 255 420 75">
<defs><filter id="ttsh" x="-5%" y="-20%" width="110%" height="150%"><feGaussianBlur stdDeviation="2.2"/></filter></defs>
<path d="M180 277 H556 Q564 277 564 285 V312 Q564 320 556 320 H180 Q172 320 172 312 V285 Q172 277 180 277 Z" fill="#000" opacity="0.22" filter="url(#ttsh)"/>
<path d="M180 275 H354 L368 260 L382 275 H556 Q564 275 564 283 V310 Q564 318 556 318 H180 Q172 318 172 310 V283 Q172 275 180 275 Z" fill="#eeeeee"/>
<path d="M178.6 275 Q179.6 274.6 181 274.6 H353.4" fill="none" stroke="#1c1c1c" stroke-width="1.3"/>
<path d="M367.5 259.6 L382 274.6 H556 Q563.6 274.6 563.6 283 V311 Q563.6 315 561 316.6" fill="none" stroke="#1c1c1c" stroke-width="1.3"/>
</svg>
<div class="t" style="left:50.67px;top:274.80px;font-size:27.2px;line-height:27.2px;letter-spacing:0.090px;color:#000;-webkit-text-stroke:0.45px #000;">Standard CD</div>
<div class="t" style="left:583.67px;top:279.00px;font-size:27.2px;line-height:27.2px;letter-spacing:0.027px;color:#000;-webkit-text-stroke:0.45px #000;">Standard CD case - Back</div>
<div class="t" style="left:189.99px;top:287.94px;font-size:22px;line-height:22px;color:#000;-webkit-text-stroke:0.5px #000;z-index:6;"><span style="letter-spacing:0.779px;">Click</span> <span style="letter-spacing:0.891px;margin-left:0.073px;">here</span> <span style="letter-spacing:1.800px;margin-left:-0.267px;">to</span> <span style="letter-spacing:1.188px;margin-left:-1.260px;">add</span> <span style="letter-spacing:1.129px;margin-left:-0.379px;">text</span> <span style="letter-spacing:1.800px;margin-left:0.267px;">to</span> <span style="letter-spacing:0.700px;margin-left:-0.170px;">your</span> <span style="letter-spacing:1.291px;margin-left:0.775px;">disc</span></div>
</section>
<main class="part" id="sec-canvas" aria-label="Disc canvas">
<div id="canvas" style="left:0;top:331px;width:1772px;height:1152px;background:#adadad;"></div>
<svg style="left:0;top:331px;" width="1772" height="1152" viewBox="0 331 1772 1152">
<circle cx="886" cy="906.3" r="518" fill="#adadad" stroke="#2a2a2a" stroke-width="1.3"/>
<circle cx="886" cy="906.3" r="509" fill="#ffffff" stroke="#2a2a2a" stroke-width="1.3"/>
<circle cx="886" cy="906.3" r="151.3" fill="#adadad" stroke="#2a2a2a" stroke-width="1.3"/>
<circle cx="886" cy="906.3" r="65" fill="#adadad" stroke="#2a2a2a" stroke-width="1.3"/>
</svg>

</main>
<aside class="part" id="sec-panel" aria-label="Properties panel">
<div id="panel" style="left:1772px;top:259px;width:891px;height:1223px;background:#ececec;"></div>
<div id="scrolltrack" style="left:2663px;top:259px;width:29px;height:1223px;background:#f8f8f8;border-left:1px solid #f1f1f1;"></div>
<div id="scrollthumb" style="left:2670px;top:265px;width:16px;height:1194px;border-radius:8px;background:#c2c2c2;"></div>
<div id="hdr1" style="left:1772px;top:259px;width:890px;height:68px;background:linear-gradient(#5f5c5c 0,#6b6868 2.4px,#a19f9f 3px,#908e8e 5px,#838282 8px,#7b7b7b 40px,#6a6767 62px,#696666 66px,#747272 68px);"></div>
<div id="hdr2" style="left:1772px;top:1429px;width:890px;height:53px;background:linear-gradient(#5a5757 0,#676464 2px,#a19f9f 3px,#908e8e 5px,#838282 8px,#7c7c7c 35px,#6f6d6d 53px);"></div>
<svg style="left:1778px;top:284px;" width="18" height="18" viewBox="0 0 18 18"><path d="M2.4 4.5 H14.3 L8.35 14.7 Z" fill="#e0e0e0"/></svg>
<svg style="left:1778px;top:1455px;" width="18" height="18" viewBox="0 0 18 18"><path d="M3 3.2 L13.6 9.2 L3 15.2 Z" fill="#e0e0e0"/></svg>
<div style="left:1810px;top:368px;width:32px;height:32px;border-radius:50%;background:#fff;border:1.5px solid #bdbdbd;box-shadow:0 0.5px 1.5px rgba(0,0,0,.12);"></div>
<div style="left:1810px;top:445px;width:32px;height:32px;border-radius:50%;background:linear-gradient(#4a8ef8,#2f7bf6);box-shadow:0 1px 2px rgba(0,0,0,.2);"></div><div style="left:1820px;top:455px;width:12px;height:12px;border-radius:50%;background:#fff;"></div>
<div style="left:1810px;top:596px;width:32px;height:32px;border-radius:50%;background:#fff;border:1.5px solid #bdbdbd;box-shadow:0 0.5px 1.5px rgba(0,0,0,.12);"></div>
<div style="left:1810px;top:1269px;width:32px;height:32px;border-radius:50%;background:#fff;border:1.5px solid #bdbdbd;box-shadow:0 0.5px 1.5px rgba(0,0,0,.12);"></div>
<div style="left:2025px;top:421px;width:80px;height:80px;background:#fff;border:1px solid #000;"></div>
<div style="left:2031px;top:526px;width:590px;height:6px;border-radius:3px;background:#b6b6b6;"></div><div style="left:2044.6px;top:548.5px;width:2px;height:9.5px;border-radius:1px;background:#8a8a8a;"></div><div style="left:2108.5px;top:548.5px;width:2px;height:9.5px;border-radius:1px;background:#8a8a8a;"></div><div style="left:2172.5px;top:548.5px;width:2px;height:9.5px;border-radius:1px;background:#8a8a8a;"></div><div style="left:2236.4px;top:548.5px;width:2px;height:9.5px;border-radius:1px;background:#8a8a8a;"></div><div style="left:2300.3px;top:548.5px;width:2px;height:9.5px;border-radius:1px;background:#8a8a8a;"></div><div style="left:2364.2px;top:548.5px;width:2px;height:9.5px;border-radius:1px;background:#8a8a8a;"></div><div style="left:2428.2px;top:548.5px;width:2px;height:9.5px;border-radius:1px;background:#8a8a8a;"></div><div style="left:2492.1px;top:548.5px;width:2px;height:9.5px;border-radius:1px;background:#8a8a8a;"></div><div style="left:2556.0px;top:548.5px;width:2px;height:9.5px;border-radius:1px;background:#8a8a8a;"></div><div style="left:2620.0px;top:548.5px;width:2px;height:9.5px;border-radius:1px;background:#8a8a8a;"></div><svg style="left:2601px;top:515px;" width="40" height="40" viewBox="0 0 40 40"><path d="M9 2.5 H31 Q35.5 2.5 35.5 7 V17.5 Q35.5 19.5 34 21 L21.5 35 Q20 36.4 18.5 35 L6 21 Q4.5 19.5 4.5 17.5 V7 Q4.5 2.5 9 2.5 Z" fill="#ffffff" stroke="#c4c4c4" stroke-width="1.2"/></svg>
<div id="dropdown" style="left:2026px;top:594px;width:598px;height:39px;border-radius:7px;background:linear-gradient(#f6f6f6,#f2f2f2);border:1px solid #dcdcdc;border-bottom-color:#c8c8c8;"></div>
<svg style="left:2598px;top:604px;" width="22" height="18" viewBox="0 0 22 18"><path d="M4.2 5.8 L10.9 12.4 L17.6 5.8" fill="none" stroke="#7b7b7b" stroke-width="2.6" stroke-linecap="round" stroke-linejoin="round"/></svg>
<div id="dirbox" style="left:1862px;top:735px;width:328px;height:328px;background:#f3f3f3;border:1px solid #dadada;"></div>
<div style="left:2026px;top:735px;width:1px;height:328px;background:#dcdcdc;"></div>
<svg style="left:1850px;top:880px;" width="345" height="40" viewBox="1850 880 345 40">
<line x1="1862" y1="899.2" x2="2170" y2="899.2" stroke="#7c7c7c" stroke-width="1.4"/>
<rect x="1853.8" y="891" width="16.6" height="16.6" fill="#f3f3f3" stroke="#7a7a7a" stroke-width="1.4"/>
<line x1="1862" y1="899.2" x2="1870" y2="899.2" stroke="#9a9a9a" stroke-width="1"/>
<path d="M2165.8 887.3 L2189.8 899.2 L2165.8 911.1 Z" fill="#787878"/>
</svg>
<div id="stops" style="left:2219px;top:735px;width:72px;height:328px;background:linear-gradient(#767676,#8a8a8a 25%,#b4b4b4 55%,#e2e2e2 82%,#f3f3f3);border-left:1px solid #d0d0d0;"></div>
<svg style="left:2288px;top:718px;" width="30" height="362" viewBox="2288 718 30 362">
<path d="M2290.4 735 L2314.2 722.6 V747.2 Z" fill="#f4ce5f"/>
<path d="M2290.4 1063 L2314.2 1050.8 V1075.4 Z" fill="#787878"/>
</svg>
<div style="left:2025px;top:1091px;width:80px;height:80px;background:#777777;border:1px solid #6c6c6c;"></div>
<div id="xbtn" style="left:2122px;top:1096px;width:78px;height:73px;border-radius:8px;background:#f4f4f4;border:1px solid #e2e2e2;border-bottom-color:#d4d4d4;"></div>
<div style="left:2031px;top:1196px;width:590px;height:6px;border-radius:3px;background:#d2d2d2;"></div><div style="left:2044.6px;top:1218.5px;width:2px;height:9.5px;border-radius:1px;background:#8a8a8a;"></div><div style="left:2108.5px;top:1218.5px;width:2px;height:9.5px;border-radius:1px;background:#8a8a8a;"></div><div style="left:2172.5px;top:1218.5px;width:2px;height:9.5px;border-radius:1px;background:#8a8a8a;"></div><div style="left:2236.4px;top:1218.5px;width:2px;height:9.5px;border-radius:1px;background:#8a8a8a;"></div><div style="left:2300.3px;top:1218.5px;width:2px;height:9.5px;border-radius:1px;background:#8a8a8a;"></div><div style="left:2364.2px;top:1218.5px;width:2px;height:9.5px;border-radius:1px;background:#8a8a8a;"></div><div style="left:2428.2px;top:1218.5px;width:2px;height:9.5px;border-radius:1px;background:#8a8a8a;"></div><div style="left:2492.1px;top:1218.5px;width:2px;height:9.5px;border-radius:1px;background:#8a8a8a;"></div><div style="left:2556.0px;top:1218.5px;width:2px;height:9.5px;border-radius:1px;background:#8a8a8a;"></div><div style="left:2620.0px;top:1218.5px;width:2px;height:9.5px;border-radius:1px;background:#8a8a8a;"></div><svg style="left:2601px;top:1185px;" width="40" height="40" viewBox="0 0 40 40"><path d="M9 2.5 H31 Q35.5 2.5 35.5 7 V17.5 Q35.5 19.5 34 21 L21.5 35 Q20 36.4 18.5 35 L6 21 Q4.5 19.5 4.5 17.5 V7 Q4.5 2.5 9 2.5 Z" fill="#ffffff" stroke="#c4c4c4" stroke-width="1.2"/></svg>
<div id="browse" style="left:2026px;top:1251px;width:410px;height:72px;border-radius:8px;background:#f4f4f4;border:1px solid #e0e0e0;border-bottom-color:#d2d2d2;"></div>
<div class="t" style="left:1802.06px;top:279.20px;font-size:27.4px;line-height:27.4px;letter-spacing:0.655px;color:#fff;-webkit-text-stroke:0.55px #fff;">Background Properties</div>
<div class="t" style="left:1801.06px;top:1450.20px;font-size:27.4px;line-height:27.4px;letter-spacing:0.563px;color:#fff;-webkit-text-stroke:0.55px #fff;">Label Layout Properties</div>
<div class="t" style="left:1848.20px;top:372.80px;font-size:26px;line-height:26px;letter-spacing:-0.002px;color:#222222;-webkit-text-stroke:0.5px #222222;">No Fill</div>
<div class="t" style="left:1848.74px;top:450.00px;font-size:26px;line-height:26px;letter-spacing:0.344px;color:#222222;-webkit-text-stroke:0.5px #222222;">Solid:</div>
<div class="t" style="left:1850.81px;top:523.30px;font-size:26px;line-height:26px;letter-spacing:0.671px;color:#222222;-webkit-text-stroke:0.5px #222222;">Opacity:</div>
<div class="t" style="left:1848.77px;top:601.40px;font-size:26px;line-height:26px;letter-spacing:0.474px;color:#222222;-webkit-text-stroke:0.5px #222222;">Gradient:</div>
<div class="t" style="left:2042.60px;top:601.40px;font-size:26px;line-height:26px;letter-spacing:0.122px;color:#b2b2b2;-webkit-text-stroke:0.5px #b2b2b2;">Linear</div>
<div class="t" style="left:1850.20px;top:671.40px;font-size:26px;line-height:26px;letter-spacing:0.746px;color:#222222;-webkit-text-stroke:0.5px #222222;">Direction:</div>
<div class="t" style="left:2217.74px;top:671.40px;font-size:26px;line-height:26px;letter-spacing:0.714px;color:#222222;-webkit-text-stroke:0.5px #222222;">Stops:</div>
<div class="t" style="left:1850.74px;top:1116.00px;font-size:26px;line-height:26px;letter-spacing:0.468px;color:#222222;-webkit-text-stroke:0.5px #222222;">Stop Point:</div>
<div class="t" style="left:2153.22px;top:1121.00px;font-size:26px;line-height:26px;letter-spacing:0.000px;color:#b2b2b2;-webkit-text-stroke:0.5px #b2b2b2;">X</div>
<div class="t" style="left:1850.81px;top:1193.20px;font-size:26px;line-height:26px;letter-spacing:0.671px;color:#222222;-webkit-text-stroke:0.5px #222222;">Opacity:</div>
<div class="t" style="left:1847.77px;top:1274.80px;font-size:26px;line-height:26px;letter-spacing:0.286px;color:#222222;-webkit-text-stroke:0.5px #222222;">Image:</div>
<div class="t" style="left:2052.50px;top:1275.30px;font-size:26px;line-height:26px;color:#b2b2b2;-webkit-text-stroke:0.5px #b2b2b2;"><span style="letter-spacing:0.468px;">Browse</span> <span style="letter-spacing:0.406px;margin-left:0.149px;">image</span> <span style="letter-spacing:0.224px;margin-left:-0.240px;">as</span> <span style="letter-spacing:0.711px;margin-left:0.446px;">background</span></div>
<div class="t" style="left:1850.20px;top:1347.40px;font-size:26px;line-height:26px;color:#acacac;-webkit-text-stroke:0.5px #acacac;"><span style="letter-spacing:0.579px;">Background</span> <span style="letter-spacing:0.531px;margin-left:0.441px;">image</span> <span style="letter-spacing:0.455px;margin-left:0.443px;">filename:</span></div>
</aside>
<footer class="part" id="sec-status" aria-label="Status bar">
<div id="status" style="left:0;top:1482px;width:2692px;height:60px;border-radius:0 0 11px 11px;background:linear-gradient(#e6e6e6 0,#cacaca 2px,#c8c8c8 50%,#c2c2c2);"></div>
<div style="left:2500px;top:1484px;width:192px;height:58px;border-radius:0 0 11px 0;background:linear-gradient(90deg,rgba(255,255,255,0),rgba(255,255,255,.28));"></div>
<div class="t" style="left:19.64px;top:1498.60px;font-size:26px;line-height:26px;color:#111;-webkit-text-stroke:0.6px #111;"><span style="letter-spacing:0.971px;">Disketch</span> <span style="letter-spacing:0.017px;margin-left:-0.738px;">Plus</span> <span style="letter-spacing:0.000px;margin-left:2.609px;">v</span> <span style="letter-spacing:1.882px;margin-left:0.541px;">5.03</span> <span style="letter-spacing:0.000px;margin-left:0.132px;">©</span> <span style="letter-spacing:-0.416px;margin-left:2.943px;">NCH</span> <span style="letter-spacing:0.780px;margin-left:1.832px;">Software</span></div>
</footer>
<section class="part" id="sec-dock" aria-label="macOS Dock">
<div id="dock" style="left:84.4px;top:1544.4px;width:2523.4px;height:140px;border-radius:10px;background:#111111;border:2px solid #b4b4b4;"></div>
<svg id="dockicons" style="left:85px;top:1546px;" width="2522" height="126" viewBox="85 1546 2522 126">

<defs>
<filter id="b3" x="-30%" y="-30%" width="160%" height="160%"><feGaussianBlur stdDeviation="3"/></filter><filter id="b1" x="-20%" y="-20%" width="140%" height="140%"><feGaussianBlur stdDeviation="1"/></filter>
<linearGradient id="fdBlue" x1="0" y1="0" x2="0" y2="1"><stop offset="0" stop-color="#1cc2fc"/><stop offset="1" stop-color="#2a72ee"/></linearGradient>
<linearGradient id="fdWhite" x1="0" y1="0" x2="0" y2="1"><stop offset="0" stop-color="#f7f8fa"/><stop offset="1" stop-color="#dbe6f3"/></linearGradient>
<radialGradient id="siriBg" cx="0.5" cy="0.45" r="0.6"><stop offset="0" stop-color="#30348c"/><stop offset="0.6" stop-color="#20246a"/><stop offset="1" stop-color="#10123a"/></radialGradient>
<linearGradient id="lpRing" x1="0" y1="0" x2="0" y2="1"><stop offset="0" stop-color="#f4f4f4"/><stop offset="1" stop-color="#b8babd"/></linearGradient>
<linearGradient id="lpBg" x1="0" y1="0" x2="0" y2="1"><stop offset="0" stop-color="#dfe1e3"/><stop offset="1" stop-color="#8e9195"/></linearGradient>
<linearGradient id="sfRing" x1="0" y1="0" x2="0" y2="1"><stop offset="0" stop-color="#ffffff"/><stop offset="1" stop-color="#d9dde2"/></linearGradient>
<linearGradient id="sfBg" x1="0" y1="0" x2="0" y2="1"><stop offset="0" stop-color="#1cc4f9"/><stop offset="1" stop-color="#1d6ee6"/></linearGradient>
<linearGradient id="mailSky" x1="0" y1="0" x2="0" y2="1"><stop offset="0" stop-color="#2f7fd6"/><stop offset="0.6" stop-color="#6fb0e8"/><stop offset="1" stop-color="#d6e8f6"/></linearGradient>
<linearGradient id="ctBook" x1="0" y1="0" x2="0" y2="1"><stop offset="0" stop-color="#c3934f"/><stop offset="1" stop-color="#ad7e42"/></linearGradient>
<linearGradient id="calPage" x1="0" y1="0" x2="0" y2="1"><stop offset="0" stop-color="#ffffff"/><stop offset="1" stop-color="#ececee"/></linearGradient>
<linearGradient id="ntTop" x1="0" y1="0" x2="0" y2="1"><stop offset="0" stop-color="#fbd93a"/><stop offset="1" stop-color="#f4c528"/></linearGradient>
<radialGradient id="cmpBg" cx="0.5" cy="0.4" r="0.7"><stop offset="0" stop-color="#ffffff"/><stop offset="1" stop-color="#dfe7ee"/></radialGradient>
<linearGradient id="phBg" x1="0" y1="0" x2="0" y2="1"><stop offset="0" stop-color="#ffffff"/><stop offset="1" stop-color="#e3e3e6"/></linearGradient>
<linearGradient id="msgBlue" x1="0" y1="0" x2="0" y2="1"><stop offset="0" stop-color="#5cbcfb"/><stop offset="1" stop-color="#1a86ee"/></linearGradient>
<linearGradient id="msgWhite" x1="0" y1="0" x2="0" y2="1"><stop offset="0" stop-color="#ffffff"/><stop offset="1" stop-color="#dfe7f2"/></linearGradient>
<linearGradient id="ftGreen" x1="0" y1="0" x2="0" y2="1"><stop offset="0" stop-color="#62f07c"/><stop offset="1" stop-color="#1cc03c"/></linearGradient>
<linearGradient id="ftCam" x1="0" y1="0" x2="0" y2="1"><stop offset="0" stop-color="#ffffff"/><stop offset="1" stop-color="#dcdcdc"/></linearGradient>
<linearGradient id="ftBadge" x1="0" y1="0" x2="0" y2="1"><stop offset="0" stop-color="#ffffff"/><stop offset="1" stop-color="#d9dbdc"/></linearGradient>
<linearGradient id="asBg" x1="0" y1="0" x2="0" y2="1"><stop offset="0" stop-color="#1fbbfb"/><stop offset="1" stop-color="#1c69ee"/></linearGradient>
<linearGradient id="nwBg" x1="0" y1="0" x2="0" y2="1"><stop offset="0" stop-color="#fafafa"/><stop offset="1" stop-color="#dedee0"/></linearGradient>
<linearGradient id="itRing" x1="0.2" y1="0" x2="0.8" y2="1"><stop offset="0" stop-color="#f0486a"/><stop offset="0.5" stop-color="#b55ad6"/><stop offset="1" stop-color="#3fb4f2"/></linearGradient>
<linearGradient id="itBg" x1="0" y1="0" x2="0" y2="1"><stop offset="0" stop-color="#ffffff"/><stop offset="1" stop-color="#e4e6ec"/></linearGradient>
<linearGradient id="itNote" x1="0.3" y1="0" x2="0.6" y2="1"><stop offset="0" stop-color="#f2405c"/><stop offset="0.5" stop-color="#d260b4"/><stop offset="0.8" stop-color="#7c6af0"/><stop offset="1" stop-color="#3f9ef4"/></linearGradient>
<linearGradient id="mtBg" x1="0" y1="0" x2="1" y2="1"><stop offset="0" stop-color="#7aa4f2"/><stop offset="0.5" stop-color="#4f82e2"/><stop offset="1" stop-color="#3566d0"/></linearGradient>
<linearGradient id="spBg" x1="0" y1="0" x2="0" y2="1"><stop offset="0" stop-color="#dfe6ec"/><stop offset="0.5" stop-color="#b4bbc2"/><stop offset="1" stop-color="#8a8f96"/></linearGradient>
<linearGradient id="spGear" x1="0" y1="0" x2="0" y2="1"><stop offset="0" stop-color="#d6d8dc"/><stop offset="1" stop-color="#8e9095"/></linearGradient>
<linearGradient id="bagL" x1="0" y1="0" x2="1" y2="1"><stop offset="0" stop-color="#e98a1c"/><stop offset="1" stop-color="#c4610c"/></linearGradient>
<linearGradient id="bagR" x1="0" y1="0" x2="0.3" y2="1"><stop offset="0" stop-color="#f7a01e"/><stop offset="0.5" stop-color="#ee8a12"/><stop offset="1" stop-color="#d36c0a"/></linearGradient>
<linearGradient id="dkBg" x1="0" y1="0" x2="1" y2="1"><stop offset="0" stop-color="#6a6f84"/><stop offset="0.45" stop-color="#3a3f56"/><stop offset="1" stop-color="#4a4f66"/></linearGradient>
<radialGradient id="dkCd" cx="0.5" cy="0.5" r="0.5"><stop offset="0" stop-color="#ffffff"/><stop offset="0.55" stop-color="#d4d6da"/><stop offset="0.85" stop-color="#f4f5f6"/><stop offset="1" stop-color="#b9bcc2"/></radialGradient>
<linearGradient id="dkPencil" x1="0" y1="0" x2="0" y2="1"><stop offset="0" stop-color="#fbe26a"/><stop offset="0.5" stop-color="#f7c42a"/><stop offset="1" stop-color="#e89a14"/></linearGradient>
<linearGradient id="flBlue" x1="0" y1="0" x2="0" y2="1"><stop offset="0" stop-color="#6cbbe8"/><stop offset="1" stop-color="#4b9fd4"/></linearGradient>
<linearGradient id="trBody" x1="0" y1="0" x2="1" y2="0"><stop offset="0" stop-color="#3a3d41"/><stop offset="0.3" stop-color="#54585d"/><stop offset="0.6" stop-color="#45484c"/><stop offset="1" stop-color="#2f3235"/></linearGradient>
</defs>


<clipPath id="fdclip"><rect x="105" y="1567.4" width="78.2" height="73.4" rx="5"/></clipPath>
<g clip-path="url(#fdclip)">
<rect x="105" y="1567.4" width="78.2" height="73.4" fill="url(#fdWhite)"/>
<path d="M105 1567.4 H146.5 Q138.5 1586 137.6 1609 H148.6 Q149 1627 152.4 1640.8 H105 Z" fill="url(#fdBlue)"/>
<path d="M146.5 1567.4 Q138.5 1586 137.6 1609 H148.6 Q149 1627 152.4 1640.8" fill="none" stroke="#1d4f9c" stroke-width="1.4"/>
<path d="M119.6 1613.4 Q144 1632 168.6 1613.4" fill="none" stroke="#1b2a48" stroke-width="2.4" stroke-linecap="round"/>
<rect x="125.2" y="1585.6" width="2.6" height="9" rx="1.3" fill="#1b2a48"/>
<rect x="160" y="1585.6" width="2.6" height="9" rx="1.3" fill="#1b2a48"/>
</g>

<circle cx="250.2" cy="1603.8" r="42" fill="#f4f2f6"/>
<circle cx="250.2" cy="1603.8" r="39" fill="url(#siriBg)"/>
<clipPath id="siriclip"><circle cx="250.2" cy="1603.8" r="39"/></clipPath>
<g clip-path="url(#siriclip)">
<g filter="url(#b3)">
<ellipse cx="246" cy="1578" rx="20" ry="9" fill="#d63aa2" opacity="0.9" transform="rotate(-18 246 1578)"/>
<ellipse cx="270" cy="1584" rx="12" ry="8" fill="#c8405a" opacity="0.75" transform="rotate(30 270 1584)"/>
<ellipse cx="228" cy="1596" rx="10" ry="14" fill="#5a58c8" opacity="0.6"/>
<ellipse cx="252" cy="1630" rx="24" ry="12" fill="#151a5c" opacity="0.7"/>
</g>
<g filter="url(#b1)">
<path d="M216 1626 Q240 1608 252 1601 Q262 1596 286 1597 Q264 1602 254 1606 Q240 1612 216 1626 Z" fill="#4fe3ea"/>
<path d="M254 1601 Q272 1604 288 1616 Q280 1600 254 1597 Z" fill="#3fcf86" opacity="0.9"/>
<path d="M257 1572 Q250 1600 262 1642 Q258 1606 259 1572 Z" fill="#f25fc0"/>
<path d="M232 1588 Q246 1594 254 1601 Q244 1600 232 1588 Z" fill="#9a7ae8" opacity="0.8"/>
<ellipse cx="253" cy="1601" rx="8" ry="4.6" fill="#ffffff"/>
</g>
</g>

<circle cx="354.2" cy="1603.8" r="42" fill="url(#lpRing)"/>
<circle cx="354.2" cy="1603.8" r="39.6" fill="url(#lpBg)"/>
<g transform="translate(354.2 1603.8) rotate(38)" fill="#56585c">
<path d="M0 -31 Q11 -17 11 0 V12 H-11 V0 Q-11 -17 0 -31 Z"/>
<path d="M-11 2 L-21 17 V22 L-11 14 Z"/>
<path d="M11 2 L21 17 V22 L11 14 Z"/>
<path d="M-6 14 H6 L3 24 Q0 30 -3 24 Z"/>
<circle cx="0" cy="-10" r="4.6" fill="#c9ccd0"/>
</g>

<circle cx="460" cy="1603.8" r="42" fill="url(#sfRing)"/>
<circle cx="460" cy="1603.8" r="38.6" fill="url(#sfBg)"/>
<line x1="490.50" y1="1603.80" x2="496.60" y2="1603.80" stroke="#ffffff" stroke-width="1.1"/><line x1="490.33" y1="1606.99" x2="494.81" y2="1607.46" stroke="#ffffff" stroke-width="1.1"/><line x1="489.83" y1="1610.14" x2="494.24" y2="1611.08" stroke="#ffffff" stroke-width="1.1"/><line x1="489.01" y1="1613.23" x2="493.29" y2="1614.62" stroke="#ffffff" stroke-width="1.1"/><line x1="487.86" y1="1616.21" x2="491.97" y2="1618.04" stroke="#ffffff" stroke-width="1.1"/><line x1="486.41" y1="1619.05" x2="491.70" y2="1622.10" stroke="#ffffff" stroke-width="1.1"/><line x1="484.68" y1="1621.73" x2="488.32" y2="1624.37" stroke="#ffffff" stroke-width="1.1"/><line x1="482.67" y1="1624.21" x2="486.01" y2="1627.22" stroke="#ffffff" stroke-width="1.1"/><line x1="480.41" y1="1626.47" x2="483.42" y2="1629.81" stroke="#ffffff" stroke-width="1.1"/><line x1="477.93" y1="1628.48" x2="480.57" y2="1632.12" stroke="#ffffff" stroke-width="1.1"/><line x1="475.25" y1="1630.21" x2="478.30" y2="1635.50" stroke="#ffffff" stroke-width="1.1"/><line x1="472.41" y1="1631.66" x2="474.24" y2="1635.77" stroke="#ffffff" stroke-width="1.1"/><line x1="469.43" y1="1632.81" x2="470.82" y2="1637.09" stroke="#ffffff" stroke-width="1.1"/><line x1="466.34" y1="1633.63" x2="467.28" y2="1638.04" stroke="#ffffff" stroke-width="1.1"/><line x1="463.19" y1="1634.13" x2="463.66" y2="1638.61" stroke="#ffffff" stroke-width="1.1"/><line x1="460.00" y1="1634.30" x2="460.00" y2="1640.40" stroke="#ffffff" stroke-width="1.1"/><line x1="456.81" y1="1634.13" x2="456.34" y2="1638.61" stroke="#ffffff" stroke-width="1.1"/><line x1="453.66" y1="1633.63" x2="452.72" y2="1638.04" stroke="#ffffff" stroke-width="1.1"/><line x1="450.57" y1="1632.81" x2="449.18" y2="1637.09" stroke="#ffffff" stroke-width="1.1"/><line x1="447.59" y1="1631.66" x2="445.76" y2="1635.77" stroke="#ffffff" stroke-width="1.1"/><line x1="444.75" y1="1630.21" x2="441.70" y2="1635.50" stroke="#ffffff" stroke-width="1.1"/><line x1="442.07" y1="1628.48" x2="439.43" y2="1632.12" stroke="#ffffff" stroke-width="1.1"/><line x1="439.59" y1="1626.47" x2="436.58" y2="1629.81" stroke="#ffffff" stroke-width="1.1"/><line x1="437.33" y1="1624.21" x2="433.99" y2="1627.22" stroke="#ffffff" stroke-width="1.1"/><line x1="435.32" y1="1621.73" x2="431.68" y2="1624.37" stroke="#ffffff" stroke-width="1.1"/><line x1="433.59" y1="1619.05" x2="428.30" y2="1622.10" stroke="#ffffff" stroke-width="1.1"/><line x1="432.14" y1="1616.21" x2="428.03" y2="1618.04" stroke="#ffffff" stroke-width="1.1"/><line x1="430.99" y1="1613.23" x2="426.71" y2="1614.62" stroke="#ffffff" stroke-width="1.1"/><line x1="430.17" y1="1610.14" x2="425.76" y2="1611.08" stroke="#ffffff" stroke-width="1.1"/><line x1="429.67" y1="1606.99" x2="425.19" y2="1607.46" stroke="#ffffff" stroke-width="1.1"/><line x1="429.50" y1="1603.80" x2="423.40" y2="1603.80" stroke="#ffffff" stroke-width="1.1"/><line x1="429.67" y1="1600.61" x2="425.19" y2="1600.14" stroke="#ffffff" stroke-width="1.1"/><line x1="430.17" y1="1597.46" x2="425.76" y2="1596.52" stroke="#ffffff" stroke-width="1.1"/><line x1="430.99" y1="1594.37" x2="426.71" y2="1592.98" stroke="#ffffff" stroke-width="1.1"/><line x1="432.14" y1="1591.39" x2="428.03" y2="1589.56" stroke="#ffffff" stroke-width="1.1"/><line x1="433.59" y1="1588.55" x2="428.30" y2="1585.50" stroke="#ffffff" stroke-width="1.1"/><line x1="435.32" y1="1585.87" x2="431.68" y2="1583.23" stroke="#ffffff" stroke-width="1.1"/><line x1="437.33" y1="1583.39" x2="433.99" y2="1580.38" stroke="#ffffff" stroke-width="1.1"/><line x1="439.59" y1="1581.13" x2="436.58" y2="1577.79" stroke="#ffffff" stroke-width="1.1"/><line x1="442.07" y1="1579.12" x2="439.43" y2="1575.48" stroke="#ffffff" stroke-width="1.1"/><line x1="444.75" y1="1577.39" x2="441.70" y2="1572.10" stroke="#ffffff" stroke-width="1.1"/><line x1="447.59" y1="1575.94" x2="445.76" y2="1571.83" stroke="#ffffff" stroke-width="1.1"/><line x1="450.57" y1="1574.79" x2="449.18" y2="1570.51" stroke="#ffffff" stroke-width="1.1"/><line x1="453.66" y1="1573.97" x2="452.72" y2="1569.56" stroke="#ffffff" stroke-width="1.1"/><line x1="456.81" y1="1573.47" x2="456.34" y2="1568.99" stroke="#ffffff" stroke-width="1.1"/><line x1="460.00" y1="1573.30" x2="460.00" y2="1567.20" stroke="#ffffff" stroke-width="1.1"/><line x1="463.19" y1="1573.47" x2="463.66" y2="1568.99" stroke="#ffffff" stroke-width="1.1"/><line x1="466.34" y1="1573.97" x2="467.28" y2="1569.56" stroke="#ffffff" stroke-width="1.1"/><line x1="469.43" y1="1574.79" x2="470.82" y2="1570.51" stroke="#ffffff" stroke-width="1.1"/><line x1="472.41" y1="1575.94" x2="474.24" y2="1571.83" stroke="#ffffff" stroke-width="1.1"/><line x1="475.25" y1="1577.39" x2="478.30" y2="1572.10" stroke="#ffffff" stroke-width="1.1"/><line x1="477.93" y1="1579.12" x2="480.57" y2="1575.48" stroke="#ffffff" stroke-width="1.1"/><line x1="480.41" y1="1581.13" x2="483.42" y2="1577.79" stroke="#ffffff" stroke-width="1.1"/><line x1="482.67" y1="1583.39" x2="486.01" y2="1580.38" stroke="#ffffff" stroke-width="1.1"/><line x1="484.68" y1="1585.87" x2="488.32" y2="1583.23" stroke="#ffffff" stroke-width="1.1"/><line x1="486.41" y1="1588.55" x2="491.70" y2="1585.50" stroke="#ffffff" stroke-width="1.1"/><line x1="487.86" y1="1591.39" x2="491.97" y2="1589.56" stroke="#ffffff" stroke-width="1.1"/><line x1="489.01" y1="1594.37" x2="493.29" y2="1592.98" stroke="#ffffff" stroke-width="1.1"/><line x1="489.83" y1="1597.46" x2="494.24" y2="1596.52" stroke="#ffffff" stroke-width="1.1"/><line x1="490.33" y1="1600.61" x2="494.81" y2="1600.14" stroke="#ffffff" stroke-width="1.1"/>
<g transform="translate(460 1603.8) rotate(42)">
<path d="M0 -34 L5.6 0 H-5.6 Z" fill="#f0382e"/>
<path d="M0 -34 L5.6 0 H0 Z" fill="#c4221c"/>
<path d="M0 34 L5.6 0 H-5.6 Z" fill="#f6f6f6"/>
<path d="M0 34 L5.6 0 H0 Z" fill="#c9cdd2"/>
</g>

<g transform="translate(563.7 1603.3) rotate(-9.2)">
<rect x="-32.5" y="-39.4" width="65" height="78.8" fill="#ffffff"/>
<circle cx="-29.60" cy="-39.4" r="1.9" fill="#111"/><circle cx="-29.60" cy="39.4" r="1.9" fill="#111"/><circle cx="-24.20" cy="-39.4" r="1.9" fill="#111"/><circle cx="-24.20" cy="39.4" r="1.9" fill="#111"/><circle cx="-18.80" cy="-39.4" r="1.9" fill="#111"/><circle cx="-18.80" cy="39.4" r="1.9" fill="#111"/><circle cx="-13.40" cy="-39.4" r="1.9" fill="#111"/><circle cx="-13.40" cy="39.4" r="1.9" fill="#111"/><circle cx="-8.00" cy="-39.4" r="1.9" fill="#111"/><circle cx="-8.00" cy="39.4" r="1.9" fill="#111"/><circle cx="-2.60" cy="-39.4" r="1.9" fill="#111"/><circle cx="-2.60" cy="39.4" r="1.9" fill="#111"/><circle cx="2.80" cy="-39.4" r="1.9" fill="#111"/><circle cx="2.80" cy="39.4" r="1.9" fill="#111"/><circle cx="8.20" cy="-39.4" r="1.9" fill="#111"/><circle cx="8.20" cy="39.4" r="1.9" fill="#111"/><circle cx="13.60" cy="-39.4" r="1.9" fill="#111"/><circle cx="13.60" cy="39.4" r="1.9" fill="#111"/><circle cx="19.00" cy="-39.4" r="1.9" fill="#111"/><circle cx="19.00" cy="39.4" r="1.9" fill="#111"/><circle cx="24.40" cy="-39.4" r="1.9" fill="#111"/><circle cx="24.40" cy="39.4" r="1.9" fill="#111"/><circle cx="29.80" cy="-39.4" r="1.9" fill="#111"/><circle cx="29.80" cy="39.4" r="1.9" fill="#111"/><circle cx="-32.5" cy="-35.20" r="1.9" fill="#111"/><circle cx="32.5" cy="-35.20" r="1.9" fill="#111"/><circle cx="-32.5" cy="-29.75" r="1.9" fill="#111"/><circle cx="32.5" cy="-29.75" r="1.9" fill="#111"/><circle cx="-32.5" cy="-24.30" r="1.9" fill="#111"/><circle cx="32.5" cy="-24.30" r="1.9" fill="#111"/><circle cx="-32.5" cy="-18.85" r="1.9" fill="#111"/><circle cx="32.5" cy="-18.85" r="1.9" fill="#111"/><circle cx="-32.5" cy="-13.40" r="1.9" fill="#111"/><circle cx="32.5" cy="-13.40" r="1.9" fill="#111"/><circle cx="-32.5" cy="-7.95" r="1.9" fill="#111"/><circle cx="32.5" cy="-7.95" r="1.9" fill="#111"/><circle cx="-32.5" cy="-2.50" r="1.9" fill="#111"/><circle cx="32.5" cy="-2.50" r="1.9" fill="#111"/><circle cx="-32.5" cy="2.95" r="1.9" fill="#111"/><circle cx="32.5" cy="2.95" r="1.9" fill="#111"/><circle cx="-32.5" cy="8.40" r="1.9" fill="#111"/><circle cx="32.5" cy="8.40" r="1.9" fill="#111"/><circle cx="-32.5" cy="13.85" r="1.9" fill="#111"/><circle cx="32.5" cy="13.85" r="1.9" fill="#111"/><circle cx="-32.5" cy="19.30" r="1.9" fill="#111"/><circle cx="32.5" cy="19.30" r="1.9" fill="#111"/><circle cx="-32.5" cy="24.75" r="1.9" fill="#111"/><circle cx="32.5" cy="24.75" r="1.9" fill="#111"/><circle cx="-32.5" cy="30.20" r="1.9" fill="#111"/><circle cx="32.5" cy="30.20" r="1.9" fill="#111"/><circle cx="-32.5" cy="35.65" r="1.9" fill="#111"/><circle cx="32.5" cy="35.65" r="1.9" fill="#111"/>
<rect x="-26.6" y="-33.4" width="53.2" height="66.8" fill="url(#mailSky)"/>
<path d="M-16 -26 Q-18 -10 -8 -2 Q-4 2 2 2 Q12 4 24 14 Q14 2 6 -4 Q2 -8 0 -14 Q-6 -16 -16 -26 Z" fill="#8a7f74"/>
<path d="M-14 -24 Q-12 -12 -6 -6 Q-2 -2 2 0 Q0 -8 -4 -12 Q-8 -16 -14 -24 Z" fill="#e4dfd6"/>
<path d="M-8 0 Q-4 -4 4 -2 Q6 4 0 10 Q-6 14 -10 8 Q-12 4 -8 0 Z" fill="#b58a4c"/>
<path d="M2 2 Q12 6 22 14 Q12 12 4 8 Z" fill="#6f6a68"/>
<circle cx="15" cy="19" r="11.4" fill="none" stroke="#6f8fc0" stroke-width="1.2" opacity="0.75"/>
<circle cx="15" cy="19" r="8" fill="none" stroke="#6f8fc0" stroke-width="0.9" opacity="0.7"/>
<path d="M-2 12 Q6 8 14 12 M-3 17 Q5 13 13 17" stroke="#6f8fc0" stroke-width="0.9" fill="none" opacity="0.7"/>
<ellipse cx="15.6" cy="20" rx="3.6" ry="4.2" fill="#3f6fb4" opacity="0.9"/>
</g>

<g transform="translate(667.7 1603.3) rotate(-9.2)">
<rect x="26" y="-33" width="9" height="17" rx="2" fill="#d9dde0"/>
<rect x="26" y="-16" width="10" height="16" rx="2" fill="#5ab7e6"/>
<rect x="26" y="0" width="10" height="16" rx="2" fill="#5cc463"/>
<rect x="26" y="16" width="10" height="15" rx="2" fill="#f2a42c"/>
<rect x="-31" y="-39.6" width="61" height="79.2" rx="4" fill="url(#ctBook)"/>
<rect x="-31" y="-39.6" width="5" height="79.2" rx="2" fill="#a87a40" opacity="0.7"/>
<rect x="-31" y="33" width="61" height="6.6" rx="3" fill="#9a6e38" opacity="0.55"/>
<circle cx="2" cy="-6" r="20" fill="#a8783c" opacity="0.55"/>
<circle cx="2" cy="-6" r="20" fill="none" stroke="#c99a5c" stroke-width="1.2" opacity="0.8"/>
<path d="M-12 8 Q-12 0 -6 -2 Q-10 -6 -9 -12 Q-7 -18 -2 -17 Q3 -16 3 -10 Q3 -5 0 -2 Q5 0 5 8 Z" fill="#b98a4c" opacity="0.9"/>
<path d="M2 9 Q2 1 8 -1 Q4 -6 6 -12 Q8 -17 12 -16 Q17 -14 16 -8 Q15 -4 13 -1 Q18 1 18 9 Z" fill="#b98a4c" opacity="0.9"/>
</g>

<g transform="translate(773 1602.6) rotate(-8.6)">
<rect x="-35.4" y="-27" width="72" height="66" rx="3" fill="#6b7078"/>
<rect x="-35.4" y="31" width="72" height="8" rx="2" fill="#4a4e55"/>
<rect x="-31.4" y="-35.4" width="62.8" height="66" rx="2.5" fill="url(#calPage)"/>
<path d="M-31.4 -17.4 V-32.9 Q-31.4 -35.4 -28.9 -35.4 H28.9 Q31.4 -35.4 31.4 -32.9 V-17.4 Z" fill="#ea5350"/>
<rect x="-31.4" y="27" width="62.8" height="3.6" rx="1.5" fill="#cfd2d6"/>
</g>

<g transform="translate(878.6 1603.3) rotate(-9.2)">
<rect x="-32.2" y="-39.6" width="64.4" height="79.2" rx="1.5" fill="#fdfcf8"/>
<path d="M-32.2 -26 V-38.1 Q-32.2 -39.6 -30.7 -39.6 H30.7 Q32.2 -39.6 32.2 -38.1 V-26 Z" fill="url(#ntTop)"/>
<rect x="-32.2" y="-26.6" width="64.4" height="1.2" fill="#e0b62a"/>
<rect x="-29" y="-19.0" width="58" height="1" fill="#d9d6cf"/><rect x="-29" y="-13.6" width="58" height="1" fill="#d9d6cf"/><rect x="-29" y="-8.2" width="58" height="1" fill="#d9d6cf"/><rect x="-29" y="-2.8" width="58" height="1" fill="#d9d6cf"/><rect x="-29" y="2.6" width="58" height="1" fill="#d9d6cf"/><rect x="-29" y="8.0" width="58" height="1" fill="#d9d6cf"/><rect x="-29" y="13.4" width="58" height="1" fill="#d9d6cf"/><rect x="-29" y="18.8" width="58" height="1" fill="#d9d6cf"/><rect x="-29" y="24.2" width="58" height="1" fill="#d9d6cf"/><rect x="-29" y="29.6" width="58" height="1" fill="#d9d6cf"/><rect x="-29" y="35.0" width="58" height="1" fill="#d9d6cf"/>
<rect x="-32.2" y="36.6" width="64.4" height="3" fill="#e4e0d6"/>
</g>

<g transform="translate(984.6 1602) rotate(-9.2)">
<rect x="-31" y="-37.6" width="62" height="75.2" rx="5" fill="#fbfbfc"/>
<rect x="-31" y="33.6" width="62" height="4" rx="2" fill="#e3e3e6"/>
<rect x="-14" y="-28" width="40" height="1" fill="#e1e1e4"/><rect x="-14" y="-19" width="40" height="1" fill="#e1e1e4"/><rect x="-14" y="-4" width="40" height="1" fill="#e1e1e4"/><rect x="-14" y="12" width="40" height="1" fill="#e1e1e4"/><rect x="-14" y="27" width="40" height="1" fill="#e1e1e4"/>
<circle cx="-20.6" cy="-23.4" r="5.6" fill="#f7941d"/>
<circle cx="-20.6" cy="-8.4" r="5.6" fill="#25a7f0"/>
<circle cx="-20.6" cy="6.6" r="5.6" fill="#5ed13c"/>
<circle cx="-20.6" cy="21.8" r="5.6" fill="#cc73e1"/>
</g>

<g transform="translate(1085.1 1603.7) rotate(-9.2)">
<clipPath id="mapclip"><rect x="-33" y="-32.6" width="66" height="65.2"/></clipPath>
<rect x="-35.4" y="-35" width="70.8" height="70" fill="#f7f5ee"/>
<g clip-path="url(#mapclip)">
<rect x="-33" y="-32.6" width="66" height="65.2" fill="#ece8dc"/>
<path d="M-6 -33 H33 V10 Q10 6 2 -6 Q-4 -16 -6 -33 Z" fill="#a6d989"/>
<path d="M4 -33 H33 V-2 Q18 -6 10 -16 Q5 -24 4 -33 Z" fill="#ece8dc"/>
<path d="M12 -33 H33 V-12 Q22 -14 17 -22 Q13 -28 12 -33 Z" fill="#8fd07a"/>
<path d="M-33 -18 L-14 -6 L-2 6 L18 18 L33 20 V30 L16 28 L-6 16 L-18 4 L-33 -6 Z" fill="#fbcf3a"/>
<path d="M-28 -2 L-18 4 L-16 33 H-27 Z" fill="#f6b9c9"/>
<path d="M-18 4 L-6 12 L-6 33 H-16 Z" fill="#ffffff"/>
<path d="M-6 12 L6 20 V33 H-6 Z" fill="#dcd8cc"/>
<rect x="-22" y="-33" width="8" height="40" fill="#3d94ea"/>
</g>
</g>
<circle cx="1070.5" cy="1612.1" r="10.6" fill="#1c7be4"/>
<path d="M1070.5 1604.4 L1076 1618.2 L1070.5 1615 L1065 1618.2 Z" fill="#ffffff"/>
<circle cx="1111.5" cy="1620.4" r="20.8" fill="url(#cmpBg)"/>
<circle cx="1111.5" cy="1620.4" r="12.2" fill="#f7fbfd" stroke="#3f7f92" stroke-width="1.2"/>
<path d="M1111.5 1602.2 L1114 1606.4 H1109 Z" fill="#d9263c"/>
<path d="M1111.5 1638 L1112.6 1635.6 H1110.4 Z M1093.8 1620.4 L1096.2 1619.4 V1621.4 Z M1129.2 1620.4 L1126.8 1619.4 V1621.4 Z" fill="#5a6a72"/>

<circle cx="1194.3" cy="1603.8" r="42" fill="url(#phBg)"/>
<g style="mix-blend-mode:multiply"><ellipse cx="1194.3" cy="1584.3" rx="10.6" ry="16.6" fill="#f7a12c" opacity="0.88" transform="rotate(0 1194.3 1603.8)"/><ellipse cx="1194.3" cy="1584.3" rx="10.6" ry="16.6" fill="#f5d92a" opacity="0.88" transform="rotate(45 1194.3 1603.8)"/><ellipse cx="1194.3" cy="1584.3" rx="10.6" ry="16.6" fill="#b5d33a" opacity="0.88" transform="rotate(90 1194.3 1603.8)"/><ellipse cx="1194.3" cy="1584.3" rx="10.6" ry="16.6" fill="#5cbf80" opacity="0.88" transform="rotate(135 1194.3 1603.8)"/><ellipse cx="1194.3" cy="1584.3" rx="10.6" ry="16.6" fill="#62b0e6" opacity="0.88" transform="rotate(180 1194.3 1603.8)"/><ellipse cx="1194.3" cy="1584.3" rx="10.6" ry="16.6" fill="#8f7fd6" opacity="0.88" transform="rotate(225 1194.3 1603.8)"/><ellipse cx="1194.3" cy="1584.3" rx="10.6" ry="16.6" fill="#d97ab4" opacity="0.88" transform="rotate(270 1194.3 1603.8)"/><ellipse cx="1194.3" cy="1584.3" rx="10.6" ry="16.6" fill="#f0524a" opacity="0.88" transform="rotate(315 1194.3 1603.8)"/></g>
<circle cx="1194.3" cy="1603.8" r="1.6" fill="#fff"/>

<path d="M1298.6 1565.6 C1322 1565.6 1340.4 1579 1340.4 1596.4 C1340.4 1613.6 1322 1627 1298.6 1627 C1293 1627 1287.6 1626.2 1282.8 1624.8 C1280 1631 1276.6 1636.4 1271.6 1640 C1273.8 1634.6 1274.4 1628 1272.8 1620.8 C1262.8 1615.2 1256.8 1606.4 1256.8 1596.4 C1256.8 1579 1275.2 1565.6 1298.6 1565.6 Z" fill="url(#msgBlue)"/>
<path d="M1312.6 1600 C1326.2 1600 1337.2 1608.8 1337.2 1619.8 C1337.2 1626.6 1333 1632.6 1326.6 1636 C1326.6 1638.8 1327.6 1641.4 1329.6 1643.6 C1325 1643.4 1321.6 1641.8 1319.2 1638.8 C1317 1639.4 1314.8 1639.6 1312.6 1639.6 C1299 1639.6 1288 1630.8 1288 1619.8 C1288 1608.8 1299 1600 1312.6 1600 Z" fill="url(#msgWhite)"/>
<circle cx="1301.4" cy="1620" r="3.3" fill="#1c5cb0"/>
<circle cx="1313.7" cy="1620" r="3.3" fill="#1c5cb0"/>
<circle cx="1326.2" cy="1620" r="3.3" fill="#1c5cb0"/>

<rect x="1362" y="1568" width="75" height="66.6" rx="9" fill="url(#ftGreen)"/>
<rect x="1373.6" y="1584.4" width="36.6" height="33.2" rx="7" fill="url(#ftCam)"/>
<path d="M1411.4 1596.6 L1422.6 1586.8 Q1425.4 1585 1425.4 1588.4 V1613.6 Q1425.4 1617 1422.6 1615.2 L1411.4 1605.4 Z" fill="#f2f2f2"/>
<circle cx="1425.4" cy="1619.6" r="21" fill="url(#ftBadge)"/>
<g transform="translate(1425.4 1619.6) rotate(-8)">
<path d="M-10.4 -8.6 Q-12.2 -6.2 -10.4 -1.4 Q-7.6 5.4 -0.8 9.6 Q4 12.4 7 10.6 L9 8.4 Q9.8 7.2 8.6 6.2 L4.8 3.6 Q3.6 3 2.6 4 L1.2 5.4 Q-3 3.2 -5.6 -1.4 L-4.4 -2.8 Q-3.4 -3.8 -4.2 -5 L-6.6 -9 Q-7.6 -10.2 -8.8 -9.6 Z" fill="#34c84a"/>
</g>

<circle cx="1508" cy="1603.8" r="42" fill="#eef1f5"/>
<circle cx="1508" cy="1603.8" r="39.2" fill="url(#asBg)"/>
<g stroke="#f4f6f9" stroke-width="5.2" stroke-linecap="round" fill="none">
<path d="M1482.6 1611.2 H1533.4"/>
<path d="M1511.6 1579.8 L1487.4 1621.8"/>
<path d="M1504.4 1579.8 L1528.6 1621.8"/>
</g>

<circle cx="1612.1" cy="1603.8" r="42" fill="#ef4056"/>
<circle cx="1612.1" cy="1603.8" r="37.6" fill="url(#nwBg)"/>
<clipPath id="nwclip"><rect x="1588.6" y="1580.3999999999999" width="47" height="46.8" rx="3.5"/></clipPath>
<g clip-path="url(#nwclip)" fill="#f0435a">
<path d="M1588.6 1580.3999999999999 H1603.6 L1635.6 1612.3999999999999 V1627.2 H1620.6 L1588.6 1595.2 Z"/>
<path d="M1618.6 1580.3999999999999 H1635.6 V1597.3999999999999 Z"/>
<path d="M1588.6 1609.2 L1606.6 1627.2 H1588.6 Z"/>
</g>

<circle cx="1717.8" cy="1603.8" r="42" fill="url(#itRing)"/>
<circle cx="1717.8" cy="1603.8" r="38.6" fill="url(#itBg)"/>
<path d="M1708.4 1584.2 L1735.6 1576.8 V1616.2 Q1735.6 1623.3999999999999 1728.2 1624.8 Q1721 1625.3999999999999 1720.6 1619.8 Q1720.6 1614.3999999999999 1727.6 1613.0 L1731.2 1612.2 V1589.2 L1712.8 1594.2 V1622.3999999999999 Q1712.8 1629.3999999999999 1705.4 1630.8 Q1698 1631.3999999999999 1697.6 1625.8 Q1697.6 1620.6 1704.6 1619.2 L1708.4 1618.3999999999999 Z" fill="url(#itNote)"/>

<circle cx="1822.3" cy="1603.8" r="42" fill="#ffffff"/>
<circle cx="1822.3" cy="1603.8" r="38.8" fill="url(#mtBg)"/>
<clipPath id="mtclip"><circle cx="1822.3" cy="1603.8" r="38.8"/></clipPath>
<g clip-path="url(#mtclip)">
<rect x="1780" y="1620.8" width="86" height="30" fill="#3f6fd2" opacity="0.85"/>
<path d="M1793.6 1616.8 L1807.4 1588.8 L1815.4 1603.2 L1830.4 1576.8 L1852.6 1616.8 Z" fill="#46b4f4"/>
<path d="M1793.6 1616.8 L1807.4 1588.8 L1815.4 1603.2 M1811.6 1616.8 L1830.4 1576.8 L1852.6 1616.8" fill="none" stroke="#ffffff" stroke-width="3.2" stroke-linejoin="miter"/>
<path d="M1780 1618.8 H1866" stroke="#ffffff" stroke-width="3.2"/>
</g>

<rect x="1886.8" y="1565.5" width="82.8" height="76.5" fill="url(#spBg)"/>
<circle cx="1928.2" cy="1603.8" r="33.6" fill="#2f3033"/>
<path d="M1954.53 1601.87 L1959.76 1602.15 L1959.76 1605.45 L1954.53 1605.73 L1954.13 1608.75 L1959.11 1610.37 L1958.25 1613.56 L1953.13 1612.48 L1951.97 1615.29 L1956.36 1618.15 L1954.70 1621.01 L1950.03 1618.64 L1948.18 1621.05 L1951.68 1624.94 L1949.34 1627.28 L1945.45 1623.78 L1943.04 1625.63 L1945.41 1630.30 L1942.55 1631.96 L1939.69 1627.57 L1936.88 1628.73 L1937.96 1633.85 L1934.77 1634.71 L1933.15 1629.73 L1930.13 1630.13 L1929.85 1635.36 L1926.55 1635.36 L1926.27 1630.13 L1923.25 1629.73 L1921.63 1634.71 L1918.44 1633.85 L1919.52 1628.73 L1916.71 1627.57 L1913.85 1631.96 L1910.99 1630.30 L1913.36 1625.63 L1910.95 1623.78 L1907.06 1627.28 L1904.72 1624.94 L1908.22 1621.05 L1906.37 1618.64 L1901.70 1621.01 L1900.04 1618.15 L1904.43 1615.29 L1903.27 1612.48 L1898.15 1613.56 L1897.29 1610.37 L1902.27 1608.75 L1901.87 1605.73 L1896.64 1605.45 L1896.64 1602.15 L1901.87 1601.87 L1902.27 1598.85 L1897.29 1597.23 L1898.15 1594.04 L1903.27 1595.12 L1904.43 1592.31 L1900.04 1589.45 L1901.70 1586.59 L1906.37 1588.96 L1908.22 1586.55 L1904.72 1582.66 L1907.06 1580.32 L1910.95 1583.82 L1913.36 1581.97 L1910.99 1577.30 L1913.85 1575.64 L1916.71 1580.03 L1919.52 1578.87 L1918.44 1573.75 L1921.63 1572.89 L1923.25 1577.87 L1926.27 1577.47 L1926.55 1572.24 L1929.85 1572.24 L1930.13 1577.47 L1933.15 1577.87 L1934.77 1572.89 L1937.96 1573.75 L1936.88 1578.87 L1939.69 1580.03 L1942.55 1575.64 L1945.41 1577.30 L1943.04 1581.97 L1945.45 1583.82 L1949.34 1580.32 L1951.68 1582.66 L1948.18 1586.55 L1950.03 1588.96 L1954.70 1586.59 L1956.36 1589.45 L1951.97 1592.31 L1953.13 1595.12 L1958.25 1594.04 L1959.11 1597.23 L1954.13 1598.85 Z" fill="url(#spGear)"/>
<circle cx="1928.2" cy="1603.8" r="20.6" fill="#47494d"/>
<g stroke="url(#spGear)" stroke-width="5.6" stroke-linecap="butt">
<path d="M1928.2 1603.8 L1928.2 1582.8" stroke="#b9bbbf"/>
<path d="M1928.2 1603.8 L1946.4 1614.3" stroke="#b9bbbf"/>
<path d="M1928.2 1603.8 L1910 1614.3" stroke="#b9bbbf"/>
</g>
<circle cx="1928.2" cy="1603.8" r="22" fill="none" stroke="#b4b6ba" stroke-width="3.4"/>
<circle cx="1928.2" cy="1603.8" r="4.2" fill="#c9cbcf"/>
<circle cx="1928.2" cy="1603.8" r="1.6" fill="#8a8c90"/>

<rect x="1990.4" y="1567.4" width="82.6" height="72.4" rx="6" fill="#050505" stroke="#c4c6c8" stroke-width="1.6"/>
<rect x="1994.4" y="1571.6" width="74.6" height="63.4" rx="3" fill="#242424"/>

<rect x="2108" y="1576.4" width="1.6" height="63.4" fill="#4f4f4f"/>

<path d="M2148.4 1566 L2192 1560 L2224.4 1567 V1598 L2182 1606 L2148.4 1597 Z" fill="#44618c"/>
<path d="M2148.4 1566 L2192 1560 L2224.4 1567 L2181 1573.4 Z" fill="#6f8db6"/>
<path d="M2148.4 1567 L2181 1574 V1584.4 L2148.4 1577.4 Z" fill="#5677a6"/>
<path d="M2148.4 1579.4 L2181 1586.4 V1596.6 L2148.4 1589.6 Z" fill="#4f6f9e"/>
<path d="M2148.4 1591.4 L2181 1598.4 V1608 L2148.4 1601 Z" fill="#4a6896"/>
<path d="M2181 1574 L2224.4 1567.4 V1577 L2181 1584.4 Z" fill="#5c7aa4"/>
<path d="M2181 1586.4 L2224.4 1579 V1588 L2181 1596.6 Z" fill="#516f98"/>
<path d="M2152 1570.4 L2172 1574.8 V1581 L2152 1576.6 Z M2152 1582.8 L2172 1587.2 V1593.4 L2152 1589 Z M2152 1594.8 L2172 1599.2 V1604 L2152 1600.6 Z" fill="#eef2f7"/>
<rect x="2152.6" y="1571.6" width="3.6" height="4" fill="#2e8fe0"/><rect x="2152.6" y="1584" width="3.6" height="4" fill="#2e8fe0"/>
<circle cx="2177" cy="1580.6" r="2.2" fill="none" stroke="#c9d3e0" stroke-width="0.9"/><circle cx="2177" cy="1593" r="2.2" fill="none" stroke="#c9d3e0" stroke-width="0.9"/>
<path d="M2138 1590 Q2136 1586 2141 1585.4 L2152 1587 L2170 1616 L2168 1649 L2146 1638 Q2143 1636 2142.4 1632 Z" fill="url(#bagL)"/>
<path d="M2170 1616 L2190 1594 Q2194 1590 2200 1589 L2228 1583 Q2233 1582.4 2232.6 1588 L2230 1626 Q2229.6 1630 2226 1631.6 L2168 1649 Z" fill="url(#bagR)"/>
<path d="M2170 1616 L2190 1594 Q2194 1590 2200 1589 L2228 1583" fill="none" stroke="#f3e9d8" stroke-width="2.4" stroke-dasharray="1.6 1.6"/>
<path d="M2141 1585.4 L2152 1587 L2170 1616" fill="none" stroke="#f3e9d8" stroke-width="2.4" stroke-dasharray="1.6 1.6"/>
<path d="M2170 1626 L2230 1606" fill="none" stroke="#f3e9d8" stroke-width="2.2" stroke-dasharray="1.6 1.6" opacity="0.9"/>
<path d="M2140 1606 L2169 1626" fill="none" stroke="#f3e9d8" stroke-width="2.2" stroke-dasharray="1.6 1.6" opacity="0.9"/>
<rect x="2162.4" y="1620" width="9.6" height="17" rx="1.5" fill="#d9dcdf" stroke="#8d9196" stroke-width="1"/>
<rect x="2165" y="1624" width="4.4" height="7" fill="#6e7278"/>

<clipPath id="dkclip"><rect x="2243.4" y="1557.2" width="93.2" height="93"/></clipPath>
<rect x="2242.6" y="1556.4" width="94.8" height="94.6" fill="#3c4158" stroke="#cfd1d6" stroke-width="1.6"/>
<g clip-path="url(#dkclip)">
<rect x="2243.4" y="1557.2" width="93.2" height="93" fill="url(#dkBg)"/>
<path d="M2243.4 1557.2 H2300 L2243.4 1592 Z" fill="#8e93a4" opacity="0.55"/>
<circle cx="2262" cy="1628.6" r="37" fill="url(#dkCd)"/>
<path d="M2262 1628.6 L2243.4 1596 L2286 1600 Z" fill="#ffffff" opacity="0.65"/>
<path d="M2262 1628.6 L2286 1662 L2243.4 1660 Z" fill="#ffffff" opacity="0.5"/>
<circle cx="2262" cy="1628.6" r="11" fill="#c4c7cc" stroke="#7f838a" stroke-width="1.2"/>
<circle cx="2262" cy="1628.6" r="6.4" fill="#5a5e68"/>
<circle cx="2262" cy="1628.6" r="3.2" fill="#2c2f38"/>
<g transform="translate(2276 1623) rotate(-40)">
<path d="M0 0 L13 -9.5 H64 V9.5 H13 Z" fill="url(#dkPencil)"/>
<path d="M0 0 L13 -9.5 V9.5 Z" fill="#f3d9a8"/>
<path d="M0 0 L5 -3.6 V3.6 Z" fill="#2b2b2b"/>
<rect x="64" y="-9.5" width="9" height="19" fill="#d7d9dc"/>
<path d="M66 -9.5 V9.5 M69 -9.5 V9.5" stroke="#8f9196" stroke-width="1"/>
<rect x="73" y="-9.5" width="16" height="19" fill="#f0909c"/>
</g>
<path d="M2292 1590 Q2306 1578 2322 1584 Q2334 1590 2334 1606 Q2334 1622 2322 1634 Q2312 1644 2296 1648 Q2308 1638 2312 1626 Q2302 1632 2290 1630 Q2302 1624 2306 1612 Q2308 1600 2292 1590 Z" fill="#2b8fe6"/>
<path d="M2298 1592 Q2310 1586 2320 1592 Q2326 1600 2324 1612 Q2320 1626 2308 1634 Q2316 1620 2314 1608 Q2312 1598 2298 1592 Z" fill="#eef5fb"/>
<path d="M2322 1584 L2334 1574 L2332 1590 Z M2296 1648 L2288 1660 L2304 1654 Z M2334 1612 L2337 1626 L2328 1620 Z" fill="#2b8fe6"/>
<path d="M2296 1596 Q2304 1592 2312 1596 Q2304 1597 2298 1600 Z" fill="#1d2c40"/>
</g>

<rect x="2366" y="1560" width="1.6" height="95.6" fill="#4f4f4f"/>

<path d="M2405 1570.4 H2476 Q2478.4 1570.4 2478.4 1572.8 V1590 H2405 Z" fill="#1c1f22"/>
<path d="M2430 1578.4 H2470 V1586 H2430 Z" fill="#efe9d2"/>
<path d="M2470 1574 H2477 V1586 H2470 Z" fill="#23352a"/>
<path d="M2401.6 1581 Q2401.6 1577.6 2405 1577.6 H2424 Q2426.4 1577.6 2427.6 1579.6 L2429.4 1582.6 Q2430.4 1584.4 2432.6 1584.4 H2479.6 Q2483 1584.4 2483 1587.8 V1636.6 Q2483 1640 2479.6 1640 H2405 Q2401.6 1640 2401.6 1636.6 Z" fill="url(#flBlue)"/>
<path d="M2401.6 1587.6 H2483" stroke="#8fd0f2" stroke-width="1" opacity="0.6"/>
<rect x="2401.6" y="1636" width="81.4" height="4" rx="2" fill="#3d88b8" opacity="0.7"/>

<path d="M2512.4 1570 L2522.6 1640 Q2524 1647 2546.6 1647 Q2569.4 1647 2570.8 1640 L2580.6 1570 Z" fill="url(#trBody)"/>
<ellipse cx="2546.5" cy="1570" rx="34.1" ry="7.8" fill="#3b3e42"/>
<ellipse cx="2546.5" cy="1570" rx="34.1" ry="7.8" fill="none" stroke="#4b4e52" stroke-width="1.2"/>
<ellipse cx="2546.5" cy="1571.4" rx="30" ry="5.2" fill="#34373a"/>

<circle cx="143.9" cy="1663.8" r="3.7" fill="#9b9b9b"/><circle cx="460.2" cy="1663.8" r="3.7" fill="#9b9b9b"/><circle cx="2031.5" cy="1663.8" r="3.7" fill="#9b9b9b"/><circle cx="2290.2" cy="1663.8" r="3.7" fill="#9b9b9b"/>
</svg>
<div class="t" style="left:756.12px;top:1572.42px;font-size:13px;line-height:13px;letter-spacing:-0.147px;color:#fff;-webkit-text-stroke:0.15px #fff;z-index:3;transform:rotate(-8.6deg);transform-origin:14px 10px;">AUG</div>
<div class="t" style="left:757.95px;top:1587.60px;font-size:44px;line-height:44px;letter-spacing:0.000px;color:#1c1c1c;font-weight:200;font-family:'DejaVu Sans', sans-serif;-webkit-text-stroke:0.35px #1c1c1c;z-index:3;transform:rotate(-8.6deg);transform-origin:11px 20px;">9</div>
<div class="t" style="left:1104.26px;top:1614.62px;font-size:13px;line-height:13px;letter-spacing:-1.500px;color:#4a5258;z-index:3;">3D</div>
<div class="t" style="left:2001.06px;top:1578.60px;font-size:21px;line-height:21px;letter-spacing:-1.008px;color:#f2f2f2;font-weight:bold;font-family:'Liberation Mono', sans-serif;-webkit-text-stroke:0.5px #f2f2f2;z-index:3;">>_</div>
</section>
</div>
</body>
</html>
